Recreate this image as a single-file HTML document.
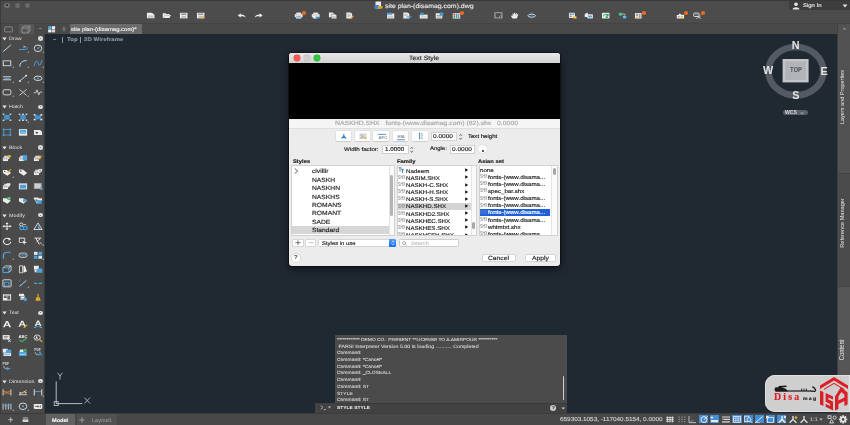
<!DOCTYPE html>
<html>
<head>
<meta charset="utf-8">
<title>site plan</title>
<style>
html,body{margin:0;padding:0;}
html{width:850px;height:425px;overflow:hidden;background:#202832;}
body{-webkit-font-smoothing:antialiased;will-change:transform;width:850px;height:425px;overflow:hidden;position:relative;background:#202832;font-family:"Liberation Sans",sans-serif;}
.a{position:absolute;}
.t{position:absolute;white-space:nowrap;line-height:1;-webkit-text-stroke:.15px currentColor;transform-origin:0 0;transform:scaleX(1.12) rotate(0.03deg);}
svg{position:absolute;overflow:visible;}
#top{left:0;top:0;width:850px;height:34px;background:#4c4c4c;}
#tabrow{left:0;top:23px;width:850px;height:11px;background:#494949;border-top:1px solid #434343;box-sizing:border-box;}
#left{left:0;top:34px;width:45px;height:380px;background:#4a4a4a;}
#right{left:836.8px;top:34px;width:13.2px;height:380px;background:#4d4d4d;}
#status{left:0;top:413px;width:850px;height:12px;background:#484848;}
#canvas{left:46px;top:34px;width:790px;height:379px;background:#202832;}
#dlg{background:#ececec;border-radius:3px;overflow:hidden;box-shadow:0 0 0 .6px rgba(0,0,0,.7),0 3px 9px rgba(0,0,0,.55);}
#dlgtitle{left:0;top:0;width:271px;height:10px;background:linear-gradient(#e9e9e9,#d2d2d2);}
#preview{left:0;width:271px;background:#000;}
.lst{background:#fff;border:1px solid #d2d2d2;box-sizing:border-box;overflow:hidden;}
.dt{font-size:6px;color:#222;}
.btn{background:#fff;border:1px solid #d6d6d6;border-radius:2px;box-sizing:border-box;}
.fld{background:#fff;border:1px solid #d2d2d2;box-sizing:border-box;}
#cmd{left:334px;top:335px;width:233px;height:66px;background:#4a4a4a;}
#cmdin{left:316px;top:401px;width:251px;height:12px;background:#464646;}
.ct{font-size:5.2px;color:#c9c9c9;left:3px;}
.sec{font-size:4.8px;color:#e2e2e2;-webkit-text-stroke:0;}
</style>
</head>
<body>
<div id="canvas" class="a" style="left:45px;width:792px;"></div>
<div id="top" class="a"></div>
<div id="tabrow" class="a"></div>
<div class="a" style="left:0;top:0;width:850px;height:1px;background:#3c3636;"></div>
<div class="a" style="left:4.4px;top:2.5px;width:5.2px;height:5.2px;border-radius:50%;background:#707070;"></div>
<div class="a" style="left:6px;top:4.1px;width:2px;height:2px;border-radius:50%;background:#242424;"></div>
<div class="a" style="left:14.5px;top:2.5px;width:5.2px;height:5.2px;border-radius:50%;background:#696969;"></div>
<div class="a" style="left:24.5px;top:2.5px;width:5.2px;height:5.2px;border-radius:50%;background:#696969;"></div>
<svg style="left:374px;top:1px" width="9" height="8" viewBox="0 0 9 8"><rect x="1.5" y="0.5" width="5.5" height="7" fill="#e8e8e8"/><rect x="0.5" y="4" width="4.5" height="3.5" fill="#3f86cc"/><rect x="4" y="5" width="4.5" height="2.5" fill="#d8a630"/></svg>
<div class="t" style="left:384.8px;top:2.6px;font-size:6.2px;color:#e4e4e4;">site plan-(disamag.com).dwg</div>
<div class="a" style="left:789px;top:1px;width:61px;height:9px;background:#3d3d3d;"></div>
<svg style="left:792px;top:1.5px" width="8" height="8" viewBox="0 0 8 8"><circle cx="4" cy="2.3" r="1.8" fill="#e6e6e6"/><path d="M0.6 7.6 C0.6 4.4 7.4 4.4 7.4 7.6Z" fill="#e6e6e6"/></svg>
<div class="t" style="left:802.8px;top:3.2px;font-size:5.3px;color:#e2e2e2;">Sign In</div>
<svg style="left:842px;top:4px" width="6" height="4" viewBox="0 0 6 4"><path d="M0.5 0.5 L5.5 0.5 L3 3.5Z" fill="#e0e0e0"/></svg>
<svg style="left:145.7px;top:12.399999999999999px" width="9.4" height="7" viewBox="0 0 10 9" preserveAspectRatio="none"><path d="M1 1 L6.2 1 L9 3.4 L9 8 L1 8Z" fill="#ededed"/><path d="M2 5.2H8M2 6.6H8" stroke="#9a9a9a" stroke-width=".7"/></svg>
<svg style="left:162.3px;top:12.399999999999999px" width="9.4" height="7" viewBox="0 0 10 9" preserveAspectRatio="none"><path d="M0.8 7.8 L0.8 1.6 L3.8 1.6 L4.6 2.6 L8 2.6 L8 4 L9.6 4 L7.8 7.8Z" fill="#ededed"/><path d="M1.6 7.4 L3 4.4 L9 4.4" stroke="#9a9a9a" stroke-width=".6" fill="none"/></svg>
<svg style="left:179.3px;top:12.399999999999999px" width="9.4" height="7" viewBox="0 0 10 9" preserveAspectRatio="none"><rect x="1" y="1" width="8" height="7.2" fill="#ededed"/><rect x="2.2" y="1.8" width="5.6" height="2.2" fill="#9a9a9a"/><rect x="2.6" y="5.2" width="4.8" height="2.4" fill="#bdbdbd"/></svg>
<svg style="left:195.7px;top:12.399999999999999px" width="9.4" height="7" viewBox="0 0 10 9" preserveAspectRatio="none"><rect x="1" y="1" width="8" height="7.2" fill="#ededed"/><rect x="2.2" y="1.8" width="5.6" height="2.2" fill="#9a9a9a"/><rect x="2.6" y="5.2" width="4.8" height="2.4" fill="#bdbdbd"/><path d="M5.6 8.4 L9 5.2" stroke="#e8b12a" stroke-width="1.4"/><path d="M8.6 5.6 L9.6 4.6" stroke="#d9402c" stroke-width="1.4"/></svg>
<svg style="left:237.3px;top:12.399999999999999px" width="9.4" height="7" viewBox="0 0 10 9" preserveAspectRatio="none"><path d="M0.8 4.4 L4 1.6 L4 3.2 C7 3.2 8.8 4.6 9.2 7.4 C8 5.8 6.4 5.4 4 5.6 L4 7.2Z" fill="#ededed"/></svg>
<svg style="left:253.5px;top:12.399999999999999px" width="9.4" height="7" viewBox="0 0 10 9" preserveAspectRatio="none"><path d="M9.2 4.4 L6 1.6 L6 3.2 C3 3.2 1.2 4.6 0.8 7.4 C2 5.8 3.6 5.4 6 5.6 L6 7.2Z" fill="#ededed"/></svg>
<svg style="left:294.3px;top:12.399999999999999px" width="9.4" height="7" viewBox="0 0 10 9" preserveAspectRatio="none"><rect x="2.4" y="0.8" width="5.2" height="2.6" fill="#ededed"/><rect x="0.8" y="2.6" width="8.4" height="4" rx=".8" fill="#ededed"/><rect x="2.2" y="5.4" width="5.6" height="3" fill="#ededed"/><rect x="2.4" y="5.6" width="5.2" height="1.3" fill="#3f9ad6"/><path d="M1.6 3.8H8.4" stroke="#9a9a9a" stroke-width=".6"/></svg>
<div class="a" style="left:302.4px;top:11.299999999999999px;width:4px;height:3.6px;border-radius:50%;background:#f26a1e;"></div>
<svg style="left:311.1px;top:12.399999999999999px" width="9.4" height="7" viewBox="0 0 10 9" preserveAspectRatio="none"><rect x="2.4" y="0.8" width="5.2" height="2.6" fill="#ededed"/><rect x="0.8" y="2.6" width="8.4" height="4" rx=".8" fill="#ededed"/><rect x="2.2" y="5.4" width="4.6" height="3" fill="#ededed"/><rect x="5" y="6" width="4.4" height="2" fill="#3f9ad6"/><path d="M1.6 3.8H8.4" stroke="#9a9a9a" stroke-width=".6"/></svg>
<svg style="left:327.7px;top:12.399999999999999px" width="9.4" height="7" viewBox="0 0 10 9" preserveAspectRatio="none"><path d="M1 0.8 L5 0.8 L6.6 2.2 L6.6 6.8 L1 6.8Z" fill="#ededed"/><path d="M3.6 2.8 L7.6 2.8 L9.2 4.2 L9.2 8.6 L3.6 8.6Z" fill="#ededed" stroke="#4c4c4c" stroke-width=".5"/><path d="M4.6 5.8H8.2M4.6 7.2H8.2" stroke="#9a9a9a" stroke-width=".6"/></svg>
<svg style="left:344.5px;top:12.399999999999999px" width="9.4" height="7" viewBox="0 0 10 9" preserveAspectRatio="none"><path d="M1.4 0.8 L5.8 0.8 L7.6 2.4 L7.6 8.4 L1.4 8.4Z" fill="#ededed"/><path d="M2.4 3H6M2.4 4.4H6.4M2.4 5.8H5" stroke="#9a9a9a" stroke-width=".6"/><path d="M5.6 8.4 L9 5.2" stroke="#e8b12a" stroke-width="1.4"/><path d="M8.6 5.6 L9.6 4.6" stroke="#d9402c" stroke-width="1.4"/></svg>
<svg style="left:385.7px;top:12.399999999999999px" width="9.4" height="7" viewBox="0 0 10 9" preserveAspectRatio="none"><path d="M1.2 2 L8.8 2 L8.8 8.4 L1.2 8.4Z" fill="#ededed"/><path d="M1 0.8 L6.6 0.8 L6.6 3.4 L1 3.4Z" fill="#3f9ad6"/><path d="M2.2 5.4H7.8M2.2 6.8H7.8" stroke="#9a9a9a" stroke-width=".6"/></svg>
<svg style="left:402.1px;top:12.399999999999999px" width="9.4" height="7" viewBox="0 0 10 9" preserveAspectRatio="none"><path d="M1.4 0.8 L5.8 0.8 L7.8 2.4 L7.8 8.4 L1.4 8.4Z" fill="#ededed"/><path d="M2.4 3H6M2.4 4.4H6" stroke="#9a9a9a" stroke-width=".6"/><path d="M4.6 6.4 L9.4 6.4 M7.8 4.8 L9.6 6.4 L7.8 8" stroke="#3f9ad6" stroke-width="1.1" fill="none"/></svg>
<svg style="left:418.9px;top:12.399999999999999px" width="9.4" height="7" viewBox="0 0 10 9" preserveAspectRatio="none"><path d="M0.8 3.4 L9.2 3.4 L9.2 8.4 L0.8 8.4Z" fill="#ededed"/><rect x="1.6" y="0.8" width="3.2" height="3.4" fill="#3f9ad6"/><path d="M2 6.2H8" stroke="#9a9a9a" stroke-width=".6"/></svg>
<svg style="left:435.3px;top:12.399999999999999px" width="9.4" height="7" viewBox="0 0 10 9" preserveAspectRatio="none"><rect x="0.8" y="1.6" width="7" height="6.8" fill="#ededed"/><rect x="1.6" y="4" width="5.4" height="1.2" fill="#9a9a9a"/><rect x="1.6" y="6" width="5.4" height="1.2" fill="#9a9a9a"/><circle cx="7" cy="2.6" r="2.2" fill="#3f9ad6"/></svg>
<svg style="left:452.1px;top:12.399999999999999px" width="9.4" height="7" viewBox="0 0 10 9" preserveAspectRatio="none"><rect x="0.8" y="1.4" width="8" height="7" fill="#ededed"/><rect x="1.6" y="2" width="1.8" height="2.6" fill="#d9402c"/><rect x="1.6" y="5" width="1.8" height="2.6" fill="#3aa655"/><rect x="4.2" y="2" width="1.6" height="5.8" fill="#3f9ad6"/><rect x="6.4" y="2" width="1.6" height="5.8" fill="#9a9a9a"/></svg>
<div class="a" style="left:460.2px;top:11.299999999999999px;width:4px;height:3.6px;border-radius:50%;background:#f26a1e;"></div>
<svg style="left:493.5px;top:12.399999999999999px" width="9.4" height="7" viewBox="0 0 10 9" preserveAspectRatio="none"><rect x="1" y="1" width="7.4" height="6.6" fill="none" stroke="#c4c4c4" stroke-width=".9"/><circle cx="7" cy="6.4" r="1.3" fill="#4c4c4c" stroke="#c4c4c4" stroke-width=".6"/></svg>
<svg style="left:510.3px;top:12.399999999999999px" width="9.4" height="7" viewBox="0 0 10 9" preserveAspectRatio="none"><path d="M2.6 8.4 L1 5.2 L1.8 4.6 L2.8 5.6 L2.6 2 L3.6 1.8 L4 4 L4.4 1 L5.4 1 L5.6 4 L6.4 1.4 L7.4 1.6 L7 4.4 L8.2 2.6 L9 3 L7.8 6.4 L7.4 8.4Z" fill="#ededed"/></svg>
<svg style="left:527.1px;top:12.399999999999999px" width="9.4" height="7" viewBox="0 0 10 9" preserveAspectRatio="none"><ellipse cx="5" cy="4.8" rx="4" ry="1.9" fill="none" stroke="#ededed" stroke-width="1"/><path d="M5 0.6V8.6" stroke="#3f9ad6" stroke-width="1"/><path d="M3.8 2 L5 0.4 L6.2 2Z" fill="#3f9ad6"/></svg>
<svg style="left:567.7px;top:12.399999999999999px" width="9.4" height="7" viewBox="0 0 10 9" preserveAspectRatio="none"><rect x="1" y="1" width="6.4" height="6.6" fill="#ededed"/><rect x="1.8" y="1.8" width="2.2" height="2" fill="#3f9ad6"/><rect x="4.6" y="1.8" width="2.2" height="2" fill="#9a9a9a"/><rect x="1.8" y="4.6" width="2.2" height="2" fill="#9a9a9a"/><path d="M5.6 5.2 L9 5.2 L9 8.4 L5.6 8.4Z" fill="#e8b12a"/><path d="M5.8 5.2 L9 8.4" stroke="#ededed" stroke-width=".6"/></svg>
<svg style="left:584.1px;top:12.399999999999999px" width="9.4" height="7" viewBox="0 0 10 9" preserveAspectRatio="none"><path d="M0.8 2.6 L4 0.8 L4 6.4 L0.8 6.4Z" fill="#ededed"/><rect x="3.6" y="3" width="5.8" height="5.2" fill="#ededed"/><rect x="4.6" y="4.6" width="3.8" height="2.2" fill="#3f9ad6"/></svg>
<svg style="left:600.7px;top:12.399999999999999px" width="9.4" height="7" viewBox="0 0 10 9" preserveAspectRatio="none"><rect x="1" y="1" width="8" height="7.4" rx="1" fill="#ededed"/><path d="M2.4 5.8 C2.4 2.6 6.6 2 7.4 4.4 M7.8 2.6 L7.6 4.8 L5.6 4.2" stroke="#38a869" stroke-width="1.1" fill="none"/><circle cx="6.2" cy="6.6" r="1.3" fill="#38a869"/></svg>
<svg style="left:617.7px;top:12.399999999999999px" width="9.4" height="7" viewBox="0 0 10 9" preserveAspectRatio="none"><circle cx="2.8" cy="2.8" r="2" fill="#52c28a"/><circle cx="7" cy="6.4" r="2" fill="#5bbfe8"/><path d="M5 2.4 C7.4 2.2 7.6 3.2 7.4 4.2" stroke="#ededed" stroke-width=".8" fill="none"/></svg>
<svg style="left:634.3px;top:12.399999999999999px" width="9.4" height="7" viewBox="0 0 10 9" preserveAspectRatio="none"><rect x="1" y="1.4" width="7" height="7" fill="#ededed"/><rect x="2" y="2.4" width="2.4" height="2.6" fill="#9a9a9a"/><rect x="2" y="6" width="2.4" height="1.6" fill="#e8b12a"/><rect x="5.2" y="2.4" width="1.8" height="5.2" fill="#9a9a9a"/></svg>
<div class="a" style="left:642.4px;top:11.299999999999999px;width:4px;height:3.6px;border-radius:50%;background:#f26a1e;"></div>
<svg style="left:676.1px;top:12.399999999999999px" width="9.4" height="7" viewBox="0 0 10 9" preserveAspectRatio="none"><path d="M0.8 4 L3 4 L3 2.4 L5 2.4 L5 3.4 L8.6 3.4 L8.6 8.2 L0.8 8.2Z" fill="#ededed"/><rect x="1.8" y="5.2" width="2" height="1.8" fill="#9a9a9a"/><rect x="5" y="5.2" width="2.4" height="1.8" fill="#e8b12a"/></svg>
<div class="a" style="left:684.2px;top:11.299999999999999px;width:4px;height:3.6px;border-radius:50%;background:#f26a1e;"></div>
<svg style="left:692.5px;top:12.399999999999999px" width="9.4" height="7" viewBox="0 0 10 9" preserveAspectRatio="none"><rect x="0.8" y="1.4" width="5.6" height="4.4" rx=".8" fill="none" stroke="#ededed" stroke-width="1"/><path d="M1.8 3.4H5.2" stroke="#9a9a9a" stroke-width=".7"/><path d="M3.6 8.6 L8.4 4.6 M4.4 5.2 L8.6 8.6" stroke="#d8d8d8" stroke-width=".9"/></svg>
<div class="a" style="left:700.6px;top:11.299999999999999px;width:4px;height:3.6px;border-radius:50%;background:#f26a1e;"></div>
<div class="a" style="left:18.5px;top:24px;width:15.5px;height:10px;background:#565656;"></div>
<svg style="left:4px;top:25.5px" width="9" height="7" viewBox="0 0 9 7"><rect x="0.7" y="0.9" width="7.6" height="5" rx=".6" fill="none" stroke="#8e8e8e" stroke-width=".9"/></svg>
<svg style="left:21px;top:24.5px" width="10" height="9" viewBox="0 0 10 9"><path d="M1 3 L3 1 L9 1 L9 6 L7 8 L1 8Z M1 3 L7 3 L9 1 M7 3 L7 8" fill="none" stroke="#9a9a9a" stroke-width=".8"/></svg>
<div class="a" style="left:38.5px;top:28.3px;width:3px;height:1.2px;background:#7a7a7a;"></div>
<svg style="left:48px;top:25.6px" width="7.2" height="6.6" viewBox="0 0 7.2 6.6"><rect x="0.2" y="0.2" width="3.2" height="2.9" fill="#4db4ee"/><rect x="3.9" y="0.2" width="3.2" height="2.9" fill="#eeeeee"/><rect x="0.2" y="3.5" width="3.2" height="2.9" fill="#f2f2f2"/><rect x="3.9" y="3.5" width="3.2" height="2.9" fill="#dcdcdc"/></svg>
<svg style="left:61.2px;top:26px" width="6" height="6" viewBox="0 0 6 6"><path d="M3 0.4V5.6" stroke="#8a8a8a" stroke-width="1"/><path d="M0.4 3H5.6" stroke="#7c7c7c" stroke-width=".7"/></svg>
<div class="a" style="left:70px;top:24px;width:72px;height:10px;background:#6b6b6b;"></div>
<div class="t" style="left:71.4px;top:26.6px;font-size:5.3px;color:#f0f0f0;">site plan-(disamag.com)*</div>
<div class="a" style="left:837.4px;top:23.6px;width:12.6px;height:10.4px;background:#525252;border-left:1px solid #424242;box-sizing:border-box;"></div>
<div class="t" style="left:842.6px;top:27.4px;font-size:4.5px;color:#9a9a9a;letter-spacing:-.4px;">&#171;</div>
<div id="left" class="a"></div>
<div class="a" style="left:0;top:0;width:1px;height:425px;background:#3b3b3b;"></div>
<div class="a" style="left:44.4px;top:34px;width:1px;height:379px;background:#3a3a3a;"></div>
<svg style="left:2.4px;top:36.8px" width="5" height="3.6" viewBox="0 0 5 3.6"><path d="M0.3 0.4 L4.7 0.4 L2.5 3.6Z" fill="#e4e4e4"/></svg>
<div class="t sec" style="left:8.8px;top:36.9px;">Draw</div>
<div class="a" style="left:38px;top:36.1px;width:5px;height:4.6px;border-radius:50%;background:#dedede;"></div>
<div class="a" style="left:39.7px;top:37.7px;width:1.6px;height:1.4px;border-radius:50%;background:#4a4a4a;"></div>
<svg style="left:2.4px;top:43.9px" width="10" height="8.6" viewBox="0 0 11 11" preserveAspectRatio="none"><path d="M1.4 9.6 L9.6 1.4" stroke="#ececec" stroke-width="1.0" fill="none" /><circle cx="1.4" cy="9.6" r="0.9" fill="#4aa3e0"/><circle cx="9.6" cy="1.4" r="0.9" fill="#4aa3e0"/></svg>
<svg style="left:17.6px;top:43.9px" width="10" height="8.6" viewBox="0 0 11 11" preserveAspectRatio="none"><path d="M1.2 7 L4.4 7 L8.4 7 C10.4 7 10.4 3.6 8 3.6 L6.4 3.6" stroke="#4aa3e0" stroke-width="1.1" fill="none" /><path d="M6 2.6 L7.4 3.6 L6 4.8" stroke="#ececec" stroke-width="0.8" fill="none" /></svg>
<svg style="left:26.8px;top:51.4px" width="2.2" height="2" viewBox="0 0 2.2 2"><path d="M2 0.2 L2 1.8 L0.2 1.8Z" fill="#b0b0b0"/></svg>
<svg style="left:32.8px;top:43.9px" width="10" height="8.6" viewBox="0 0 11 11" preserveAspectRatio="none"><circle cx="5.5" cy="5.5" r="4.2" fill="none" stroke="#ececec" stroke-width="1.0"/><path d="M5.5 5.5 L8.4 2.6" stroke="#4aa3e0" stroke-width="1.0" fill="none" /><circle cx="5.5" cy="5.5" r="0.9" fill="#4aa3e0"/></svg>
<svg style="left:42.0px;top:51.4px" width="2.2" height="2" viewBox="0 0 2.2 2"><path d="M2 0.2 L2 1.8 L0.2 1.8Z" fill="#b0b0b0"/></svg>
<svg style="left:2.4px;top:58.7px" width="10" height="8.6" viewBox="0 0 11 11" preserveAspectRatio="none"><rect x="1.4" y="2.4" width="8.2" height="6.2" rx="0" fill="none" stroke="#ececec" stroke-width="1.0"/><circle cx="1.4" cy="2.4" r="0.9" fill="#4aa3e0"/><circle cx="9.6" cy="8.6" r="0.9" fill="#4aa3e0"/></svg>
<svg style="left:11.6px;top:66.2px" width="2.2" height="2" viewBox="0 0 2.2 2"><path d="M2 0.2 L2 1.8 L0.2 1.8Z" fill="#b0b0b0"/></svg>
<svg style="left:17.6px;top:58.7px" width="10" height="8.6" viewBox="0 0 11 11" preserveAspectRatio="none"><path d="M2 9.4 C2 5 5 2 9.4 2" stroke="#ececec" stroke-width="1.0" fill="none" /><circle cx="2" cy="9.4" r="0.9" fill="#4aa3e0"/><circle cx="9.4" cy="2" r="0.9" fill="#4aa3e0"/><circle cx="4" cy="4.2" r="0.8" fill="#4aa3e0"/></svg>
<svg style="left:26.8px;top:66.2px" width="2.2" height="2" viewBox="0 0 2.2 2"><path d="M2 0.2 L2 1.8 L0.2 1.8Z" fill="#b0b0b0"/></svg>
<svg style="left:32.8px;top:58.7px" width="10" height="8.6" viewBox="0 0 11 11" preserveAspectRatio="none"><path d="M1.4 9 C2.4 1.4 4.8 1.4 5.6 5.4 C6.4 9.4 8.6 9 9.6 1.6" stroke="#4aa3e0" stroke-width="1.1" fill="none" /></svg>
<svg style="left:42.0px;top:66.2px" width="2.2" height="2" viewBox="0 0 2.2 2"><path d="M2 0.2 L2 1.8 L0.2 1.8Z" fill="#b0b0b0"/></svg>
<svg style="left:2.4px;top:73.6px" width="10" height="8.6" viewBox="0 0 11 11" preserveAspectRatio="none"><path d="M1 3.6 H10 M1 7.4 H10" stroke="#ececec" stroke-width="1.0" fill="none" /><path d="M2.4 5.5 H8.6" stroke="#4aa3e0" stroke-width="1.2" fill="none" /></svg>
<svg style="left:11.6px;top:81.1px" width="2.2" height="2" viewBox="0 0 2.2 2"><path d="M2 0.2 L2 1.8 L0.2 1.8Z" fill="#b0b0b0"/></svg>
<svg style="left:17.6px;top:73.6px" width="10" height="8.6" viewBox="0 0 11 11" preserveAspectRatio="none"><path d="M2 9 L9 2" stroke="#ececec" stroke-width="1.0" fill="none" /><circle cx="2" cy="9" r="1.1" fill="#ececec"/><circle cx="9" cy="2" r="1.1" fill="#ececec"/><circle cx="5.5" cy="5.5" r="0.8" fill="#4aa3e0"/></svg>
<svg style="left:26.8px;top:81.1px" width="2.2" height="2" viewBox="0 0 2.2 2"><path d="M2 0.2 L2 1.8 L0.2 1.8Z" fill="#b0b0b0"/></svg>
<svg style="left:32.8px;top:73.6px" width="10" height="8.6" viewBox="0 0 11 11" preserveAspectRatio="none"><ellipse cx="5.5" cy="5.5" rx="4.4" ry="2.8" fill="none" stroke="#ececec" stroke-width="1"/><circle cx="5.5" cy="5.5" r="1.1" fill="#4aa3e0"/></svg>
<svg style="left:42.0px;top:81.1px" width="2.2" height="2" viewBox="0 0 2.2 2"><path d="M2 0.2 L2 1.8 L0.2 1.8Z" fill="#b0b0b0"/></svg>
<svg style="left:2.4px;top:87.7px" width="10" height="8.6" viewBox="0 0 11 11" preserveAspectRatio="none"><rect x="1.2" y="2.2" width="8.6" height="6.6" rx="2" fill="none" stroke="#ececec" stroke-width="1.0"/></svg>
<svg style="left:11.6px;top:95.2px" width="2.2" height="2" viewBox="0 0 2.2 2"><path d="M2 0.2 L2 1.8 L0.2 1.8Z" fill="#b0b0b0"/></svg>
<svg style="left:17.6px;top:87.7px" width="10" height="8.6" viewBox="0 0 11 11" preserveAspectRatio="none"><path d="M1.6 1.8 L9.4 9.4" stroke="#ececec" stroke-width="0.9" fill="none" /><path d="M1.6 9.4 L9.4 1.8" stroke="#ececec" stroke-width="0.9" fill="none" /><circle cx="5.5" cy="5.6" r="0.8" fill="#4aa3e0"/></svg>
<svg style="left:26.8px;top:95.2px" width="2.2" height="2" viewBox="0 0 2.2 2"><path d="M2 0.2 L2 1.8 L0.2 1.8Z" fill="#b0b0b0"/></svg>
<svg style="left:32.8px;top:87.7px" width="10" height="8.6" viewBox="0 0 11 11" preserveAspectRatio="none"><path d="M1 6 L3.2 6 L4.4 2.4 L6.4 8.8 L7.6 5.2 L10 5.2" stroke="#ececec" stroke-width="0.9" fill="none" /></svg>
<svg style="left:2.4px;top:105.2px" width="5" height="3.6" viewBox="0 0 5 3.6"><path d="M0.3 0.4 L4.7 0.4 L2.5 3.6Z" fill="#e4e4e4"/></svg>
<div class="t sec" style="left:8.8px;top:105.30000000000001px;">Hatch</div>
<div class="a" style="left:38px;top:104.5px;width:5px;height:4.6px;border-radius:50%;background:#dedede;"></div>
<div class="a" style="left:39.7px;top:106.10000000000001px;width:1.6px;height:1.4px;border-radius:50%;background:#4a4a4a;"></div>
<svg style="left:2.4px;top:113.3px" width="10" height="8.6" viewBox="0 0 11 11" preserveAspectRatio="none"><rect x="2.6" y="2.6" width="5.8" height="5.8" rx="0" fill="#3a8fd0"/><path d="M2.4 5 L5 2.4 M2.4 8 L8 2.4 M5 8.6 L8.6 5" stroke="#4aa3e0" stroke-width="0.8" fill="none" /><rect x="0.8" y="0.8" width="1.8" height="1.8" rx="0" fill="#d8d8d8"/><rect x="8.4" y="0.8" width="1.8" height="1.8" rx="0" fill="#d8d8d8"/><rect x="0.8" y="8.4" width="1.8" height="1.8" rx="0" fill="#d8d8d8"/><rect x="8.4" y="8.4" width="1.8" height="1.8" rx="0" fill="#d8d8d8"/></svg>
<svg style="left:17.6px;top:113.3px" width="10" height="8.6" viewBox="0 0 11 11" preserveAspectRatio="none"><rect x="2.6" y="2.6" width="5.8" height="5.8" rx="0" fill="#3a8fd0"/><path d="M2.4 5 L5 2.4 M2.4 8 L8 2.4 M5 8.6 L8.6 5" stroke="#4aa3e0" stroke-width="0.8" fill="none" /><rect x="0.8" y="0.8" width="1.8" height="1.8" rx="0" fill="#d8d8d8"/><rect x="8.4" y="0.8" width="1.8" height="1.8" rx="0" fill="#d8d8d8"/><rect x="0.8" y="8.4" width="1.8" height="1.8" rx="0" fill="#d8d8d8"/><rect x="8.4" y="8.4" width="1.8" height="1.8" rx="0" fill="#d8d8d8"/><rect x="4.6" y="0.8" width="1.8" height="1.8" rx="0" fill="#ececec"/><rect x="4.6" y="8.4" width="1.8" height="1.8" rx="0" fill="#ececec"/></svg>
<svg style="left:26.8px;top:120.8px" width="2.2" height="2" viewBox="0 0 2.2 2"><path d="M2 0.2 L2 1.8 L0.2 1.8Z" fill="#b0b0b0"/></svg>
<svg style="left:32.8px;top:113.3px" width="10" height="8.6" viewBox="0 0 11 11" preserveAspectRatio="none"><rect x="2" y="3" width="7" height="5" rx="0" fill="#3a8fd0"/><path d="M2 6 L5 3 M4 8 L9 3" stroke="#4aa3e0" stroke-width="0.8" fill="none" /><rect x="0.8" y="1.4" width="2" height="2" rx="0" fill="#ececec"/><rect x="8.2" y="1.4" width="2" height="2" rx="0" fill="#ececec"/><rect x="0.8" y="7.4" width="2" height="2" rx="0" fill="#ececec"/><rect x="8.2" y="7.4" width="2" height="2" rx="0" fill="#ececec"/></svg>
<svg style="left:2.4px;top:127.7px" width="10" height="8.6" viewBox="0 0 11 11" preserveAspectRatio="none"><rect x="2" y="2" width="7" height="7" rx="0" fill="none" stroke="#4aa3e0" stroke-width="1.0"/><rect x="0.8" y="0.8" width="1.8" height="1.8" rx="0" fill="#4aa3e0"/><rect x="8.4" y="0.8" width="1.8" height="1.8" rx="0" fill="#4aa3e0"/><rect x="0.8" y="8.4" width="1.8" height="1.8" rx="0" fill="#4aa3e0"/><rect x="8.4" y="8.4" width="1.8" height="1.8" rx="0" fill="#4aa3e0"/></svg>
<svg style="left:17.6px;top:127.7px" width="10" height="8.6" viewBox="0 0 11 11" preserveAspectRatio="none"><rect x="1" y="1.4" width="9" height="8.4" rx="0" fill="#ececec"/><rect x="2" y="2.4" width="7" height="5" rx="0" fill="#4aa3e0"/><path d="M2 7 L4.6 4.6 L6.4 6.4 L7.6 5.4 L9 7" stroke="#ececec" stroke-width="0.7" fill="none" /></svg>
<svg style="left:32.8px;top:127.7px" width="10" height="8.6" viewBox="0 0 11 11" preserveAspectRatio="none"><path d="M1 2.4 L6.6 2.4 C9 2.4 10 4.4 10 6.4 L10 9 L1 9Z" fill="#ececec"/><rect x="3" y="5" width="2.4" height="2" rx="0" fill="#4a4a4a"/></svg>
<svg style="left:2.4px;top:145.8px" width="5" height="3.6" viewBox="0 0 5 3.6"><path d="M0.3 0.4 L4.7 0.4 L2.5 3.6Z" fill="#e4e4e4"/></svg>
<div class="t sec" style="left:8.8px;top:145.9px;">Block</div>
<div class="a" style="left:38px;top:145.1px;width:5px;height:4.6px;border-radius:50%;background:#dedede;"></div>
<div class="a" style="left:39.7px;top:146.7px;width:1.6px;height:1.4px;border-radius:50%;background:#4a4a4a;"></div>
<svg style="left:2.4px;top:153.5px" width="10" height="8.6" viewBox="0 0 11 11" preserveAspectRatio="none"><rect x="1" y="4.4" width="5.6" height="4.6" rx="0" fill="#ececec"/><rect x="2.4" y="2.2" width="5.8" height="4.4" rx="0" fill="#d6d6d6"/><rect x="1.8" y="5.4" width="1.6" height="1.4" rx="0" fill="#a0a0a0"/><rect x="4.2" y="5.4" width="1.6" height="1.4" rx="0" fill="#a0a0a0"/><circle cx="8" cy="3" r="1.8" fill="#e8b12a"/></svg>
<svg style="left:17.6px;top:153.5px" width="10" height="8.6" viewBox="0 0 11 11" preserveAspectRatio="none"><rect x="1" y="4.4" width="5.6" height="4.6" rx="0" fill="#ececec"/><rect x="2.4" y="2.2" width="5.8" height="4.4" rx="0" fill="#d6d6d6"/><rect x="1.8" y="5.4" width="1.6" height="1.4" rx="0" fill="#a0a0a0"/><rect x="4.2" y="5.4" width="1.6" height="1.4" rx="0" fill="#a0a0a0"/><rect x="5.4" y="1.4" width="4.6" height="7" rx="0" fill="#4aa3e0"/></svg>
<svg style="left:32.8px;top:153.5px" width="10" height="8.6" viewBox="0 0 11 11" preserveAspectRatio="none"><rect x="1" y="4.4" width="5.6" height="4.6" rx="0" fill="#ececec"/><rect x="2.4" y="2.2" width="5.8" height="4.4" rx="0" fill="#d6d6d6"/><rect x="1.8" y="5.4" width="1.6" height="1.4" rx="0" fill="#a0a0a0"/><rect x="4.2" y="5.4" width="1.6" height="1.4" rx="0" fill="#a0a0a0"/><path d="M5 8 L9.6 2.4" stroke="#e8b12a" stroke-width="1.4" fill="none" /><path d="M9 3 L10 1.8" stroke="#d9402c" stroke-width="1.4" fill="none" /></svg>
<svg style="left:2.4px;top:168.1px" width="10" height="8.6" viewBox="0 0 11 11" preserveAspectRatio="none"><path d="M1 2.4 L5 2.4 L10 6 L6 10 L1 6.4Z" fill="#ececec"/><circle cx="3" cy="4.4" r="0.8" fill="#4a4a4a"/><path d="M6 6 L9.8 1.8" stroke="#e8b12a" stroke-width="1.3" fill="none" /></svg>
<svg style="left:11.6px;top:175.6px" width="2.2" height="2" viewBox="0 0 2.2 2"><path d="M2 0.2 L2 1.8 L0.2 1.8Z" fill="#b0b0b0"/></svg>
<svg style="left:17.6px;top:168.1px" width="10" height="8.6" viewBox="0 0 11 11" preserveAspectRatio="none"><path d="M1 1.8 L5.4 1.8 L10 6.4 L6.4 10 L1 5.6Z" fill="#ececec"/><circle cx="3" cy="3.8" r="0.9" fill="#4a4a4a"/></svg>
<svg style="left:32.8px;top:168.1px" width="10" height="8.6" viewBox="0 0 11 11" preserveAspectRatio="none"><rect x="1" y="4.4" width="5.6" height="4.6" rx="0" fill="#ececec"/><rect x="2.4" y="2.2" width="5.8" height="4.4" rx="0" fill="#d6d6d6"/><rect x="1.8" y="5.4" width="1.6" height="1.4" rx="0" fill="#a0a0a0"/><rect x="4.2" y="5.4" width="1.6" height="1.4" rx="0" fill="#a0a0a0"/><rect x="6" y="1.2" width="4" height="3.4" rx="0" fill="#ececec"/><rect x="6.8" y="2" width="2.4" height="1.6" rx="0" fill="#a0a0a0"/></svg>
<svg style="left:2.4px;top:182.3px" width="10" height="8.6" viewBox="0 0 11 11" preserveAspectRatio="none"><rect x="1" y="4.4" width="5.6" height="4.6" rx="0" fill="#ececec"/><rect x="2.4" y="2.2" width="5.8" height="4.4" rx="0" fill="#d6d6d6"/><rect x="1.8" y="5.4" width="1.6" height="1.4" rx="0" fill="#a0a0a0"/><rect x="4.2" y="5.4" width="1.6" height="1.4" rx="0" fill="#a0a0a0"/><rect x="5.4" y="1.6" width="3.8" height="3" rx="0" fill="#ececec"/></svg>
<svg style="left:17.6px;top:182.3px" width="10" height="8.6" viewBox="0 0 11 11" preserveAspectRatio="none"><rect x="1" y="1.8" width="9" height="7.6" rx="0" fill="#ececec"/><rect x="2" y="3.8" width="7" height="4.6" rx="0" fill="#4aa3e0"/><path d="M2 2.8 H9" stroke="#a0a0a0" stroke-width="0.6" fill="none" /></svg>
<svg style="left:32.8px;top:182.3px" width="10" height="8.6" viewBox="0 0 11 11" preserveAspectRatio="none"><rect x="1" y="1.4" width="8.4" height="7.4" rx="0" fill="#cfcfcf"/><rect x="1.6" y="2" width="7.2" height="6.2" rx="0" fill="none" stroke="#8f8f8f" stroke-width="0.6"/><circle cx="9" cy="8.6" r="1.6" fill="#4aa3e0"/></svg>
<svg style="left:2.4px;top:195.9px" width="10" height="8.6" viewBox="0 0 11 11" preserveAspectRatio="none"><path d="M1 3 L5.4 3 L9.6 6.2 L6 9.8 L1 6.6Z" fill="#ececec"/><circle cx="7.6" cy="3" r="2.2" fill="#3fae62"/><path d="M6.6 3 L7.4 3.8 L8.8 2.2" stroke="#ececec" stroke-width="0.6" fill="none" /></svg>
<svg style="left:17.6px;top:195.9px" width="10" height="8.6" viewBox="0 0 11 11" preserveAspectRatio="none"><path d="M1 3 L5.4 3 L9.6 6.2 L6 9.8 L1 6.6Z" fill="#ececec"/><rect x="5.4" y="4.4" width="4.6" height="3" rx="0" fill="#4aa3e0"/></svg>
<svg style="left:32.8px;top:195.9px" width="10" height="8.6" viewBox="0 0 11 11" preserveAspectRatio="none"><rect x="1" y="2" width="5" height="2.6" rx="0" fill="#ececec"/><rect x="5" y="3" width="5" height="3" rx="0" fill="#ececec"/><rect x="3.4" y="5.6" width="6" height="4.4" rx="0" fill="#4aa3e0"/><path d="M2.6 4.6 C2.6 7.6 4 8 5 8" stroke="#ececec" stroke-width="0.8" fill="none" /></svg>
<svg style="left:2.4px;top:213.60000000000002px" width="5" height="3.6" viewBox="0 0 5 3.6"><path d="M0.3 0.4 L4.7 0.4 L2.5 3.6Z" fill="#e4e4e4"/></svg>
<div class="t sec" style="left:8.8px;top:213.70000000000002px;">Modify</div>
<div class="a" style="left:38px;top:212.9px;width:5px;height:4.6px;border-radius:50%;background:#dedede;"></div>
<div class="a" style="left:39.7px;top:214.5px;width:1.6px;height:1.4px;border-radius:50%;background:#4a4a4a;"></div>
<svg style="left:2.4px;top:222.3px" width="10" height="8.6" viewBox="0 0 11 11" preserveAspectRatio="none"><path d="M5.5 1.6 V9.4 M1.6 5.5 H9.4" stroke="#ececec" stroke-width="1.1" fill="none" /><path d="M5.5 0.4 L7.2 2.6 L3.8 2.6Z M5.5 10.6 L7.2 8.4 L3.8 8.4Z M0.4 5.5 L2.6 3.8 L2.6 7.2Z M10.6 5.5 L8.4 3.8 L8.4 7.2Z" fill="#ececec"/></svg>
<svg style="left:17.6px;top:222.3px" width="10" height="8.6" viewBox="0 0 11 11" preserveAspectRatio="none"><circle cx="3.6" cy="3.2" r="1.9" fill="none" stroke="#ececec" stroke-width="1.0"/><circle cx="4.2" cy="7.6" r="2.2" fill="none" stroke="#4aa3e0" stroke-width="1.3"/><circle cx="8" cy="7.6" r="2.2" fill="none" stroke="#4aa3e0" stroke-width="1.3"/><path d="M6 3.2 L9 3.2" stroke="#ececec" stroke-width="0.8" fill="none" /></svg>
<svg style="left:32.8px;top:222.3px" width="10" height="8.6" viewBox="0 0 11 11" preserveAspectRatio="none"><path d="M5.5 1.2 L10 9.6 L1 9.6Z" fill="none" stroke="#ececec" stroke-width="1"/><path d="M5.5 3.6 L8.2 8.8 L5.5 8.8Z" fill="#4aa3e0"/><path d="M5.5 0.6 V10.4" stroke="#4aa3e0" stroke-width="0.6" fill="none" stroke-dasharray="1 1"/></svg>
<svg style="left:2.4px;top:236.5px" width="10" height="8.6" viewBox="0 0 11 11" preserveAspectRatio="none"><path d="M8.6 3 A4 4 0 1 0 9.6 6" stroke="#ececec" stroke-width="1.2" fill="none" /><path d="M6.6 0.8 L10 2.4 L7.4 4.8Z" fill="#ececec"/></svg>
<svg style="left:17.6px;top:236.5px" width="10" height="8.6" viewBox="0 0 11 11" preserveAspectRatio="none"><rect x="1.4" y="1.4" width="6" height="5.4" rx="0" fill="none" stroke="#ececec" stroke-width="0.9"/><path d="M1.4 1.4 H7.4" stroke="#ececec" stroke-width="0.9" fill="none" stroke-dasharray="1.2 .8"/><path d="M5 4.6 L10 7.4 L7.6 7.8 L6.8 10.2Z" fill="#ececec"/></svg>
<svg style="left:32.8px;top:236.5px" width="10" height="8.6" viewBox="0 0 11 11" preserveAspectRatio="none"><path d="M1.6 1.4 L9 1.4 M3 1.4 L7 9.6 M8 2 L4 6" stroke="#ececec" stroke-width="1.1" fill="none" /><path d="M7.4 6.4 L9.8 9.6" stroke="#ececec" stroke-width="0.9" fill="none" /></svg>
<svg style="left:42.0px;top:244.0px" width="2.2" height="2" viewBox="0 0 2.2 2"><path d="M2 0.2 L2 1.8 L0.2 1.8Z" fill="#b0b0b0"/></svg>
<svg style="left:2.4px;top:250.7px" width="10" height="8.6" viewBox="0 0 11 11" preserveAspectRatio="none"><path d="M1.6 9.8 L1.6 6 C1.6 3 3.4 1.6 6.4 1.6 L9.8 1.6" stroke="#4aa3e0" stroke-width="1.5" fill="none" /></svg>
<svg style="left:11.6px;top:258.2px" width="2.2" height="2" viewBox="0 0 2.2 2"><path d="M2 0.2 L2 1.8 L0.2 1.8Z" fill="#b0b0b0"/></svg>
<svg style="left:17.6px;top:250.7px" width="10" height="8.6" viewBox="0 0 11 11" preserveAspectRatio="none"><rect x="1" y="2.6" width="9" height="5.6" rx="2.8" fill="none" stroke="#ececec" stroke-width="0.9"/><rect x="3" y="4.3" width="5.6" height="2.2" rx="1.1" fill="none" stroke="#4aa3e0" stroke-width="0.9"/></svg>
<svg style="left:32.8px;top:250.7px" width="10" height="8.6" viewBox="0 0 11 11" preserveAspectRatio="none"><rect x="1" y="1" width="4" height="4" rx="0" fill="#d8e6f0"/><rect x="6" y="1" width="4" height="4" rx="0" fill="#4aa3e0"/><rect x="1" y="6" width="4" height="4" rx="0" fill="#4aa3e0"/><rect x="6" y="6" width="4" height="4" rx="0" fill="#d8e6f0"/></svg>
<svg style="left:42.0px;top:258.2px" width="2.2" height="2" viewBox="0 0 2.2 2"><path d="M2 0.2 L2 1.8 L0.2 1.8Z" fill="#b0b0b0"/></svg>
<svg style="left:2.4px;top:264.7px" width="10" height="8.6" viewBox="0 0 11 11" preserveAspectRatio="none"><rect x="1" y="3.6" width="6.6" height="6" rx="1" fill="none" stroke="#4aa3e0" stroke-width="1.2"/><path d="M1.4 3.6 L3.8 1.2 L10 1.2 L10 7 L7.6 9.4 M7.6 3.6 L10 1.2" stroke="#ececec" stroke-width="0.9" fill="none" /></svg>
<svg style="left:17.6px;top:264.7px" width="10" height="8.6" viewBox="0 0 11 11" preserveAspectRatio="none"><path d="M1.6 1 L5 1 L5 10 L1.6 10Z" fill="none" stroke="#ececec" stroke-width=".9"/><path d="M6 1 L6 10 L9.8 8.4 L7.6 1Z" fill="#ececec"/></svg>
<svg style="left:32.8px;top:264.7px" width="10" height="8.6" viewBox="0 0 11 11" preserveAspectRatio="none"><rect x="1" y="1" width="5.4" height="5" rx="0" fill="#ececec"/><rect x="4.6" y="4.6" width="5.6" height="5.4" rx="0" fill="#4aa3e0"/><rect x="1.8" y="6.4" width="2.2" height="3" rx="0" fill="#ececec"/></svg>
<svg style="left:2.4px;top:278.9px" width="10" height="8.6" viewBox="0 0 11 11" preserveAspectRatio="none"><rect x="1" y="1" width="9" height="9" rx="1" fill="none" stroke="#ececec" stroke-width="1.0"/><rect x="2.8" y="4.2" width="4.8" height="4.6" rx="0" fill="none" stroke="#4aa3e0" stroke-width="1.1"/></svg>
<svg style="left:17.6px;top:278.9px" width="10" height="8.6" viewBox="0 0 11 11" preserveAspectRatio="none"><path d="M1.6 9.4 L9.4 1.6" stroke="#ececec" stroke-width="0.9" fill="none" /><circle cx="3.6" cy="7.4" r="1.1" fill="#4aa3e0"/><circle cx="7.4" cy="3.6" r="1.1" fill="#4aa3e0"/><path d="M1 3 L3 1" stroke="#a0a0a0" stroke-width="0.7" fill="none" /></svg>
<svg style="left:26.8px;top:286.4px" width="2.2" height="2" viewBox="0 0 2.2 2"><path d="M2 0.2 L2 1.8 L0.2 1.8Z" fill="#b0b0b0"/></svg>
<svg style="left:32.8px;top:278.9px" width="10" height="8.6" viewBox="0 0 11 11" preserveAspectRatio="none"><path d="M1 5.5 H4.4 M6.6 5.5 H10" stroke="#4aa3e0" stroke-width="1.6" fill="none" /><circle cx="5.5" cy="5.5" r="0.6" fill="#4aa3e0"/></svg>
<svg style="left:2.4px;top:293.1px" width="10" height="8.6" viewBox="0 0 11 11" preserveAspectRatio="none"><rect x="1" y="1.6" width="9" height="8" rx="0" fill="#ececec"/><rect x="2" y="4" width="3.2" height="2.4" rx="0" fill="#5a5a5a"/><rect x="5.8" y="4" width="3.2" height="4.4" rx="0" fill="#5a5a5a"/><path d="M2 2.8 H9" stroke="#5a5a5a" stroke-width="0.7" fill="none" /></svg>
<svg style="left:17.6px;top:293.1px" width="10" height="8.6" viewBox="0 0 11 11" preserveAspectRatio="none"><rect x="1" y="1" width="5.6" height="3" rx="0" fill="#ececec"/><rect x="2.2" y="3.4" width="5.6" height="5.2" rx="0" fill="#ececec"/><rect x="2.8" y="4.2" width="4.2" height="3.4" rx="0" fill="none" stroke="#5a5a5a" stroke-width="0.6"/><circle cx="8" cy="8.2" r="2" fill="#4aa3e0"/></svg>
<svg style="left:32.8px;top:293.1px" width="10" height="8.6" viewBox="0 0 11 11" preserveAspectRatio="none"><path d="M5.5 0.8 V5.4" stroke="#e8b12a" stroke-width="1.2" fill="none" /><path d="M2.6 10 L3.6 5.4 L7.4 5.4 L8.4 10Z" fill="#e0a72a"/></svg>
<svg style="left:2.4px;top:311.2px" width="5" height="3.6" viewBox="0 0 5 3.6"><path d="M0.3 0.4 L4.7 0.4 L2.5 3.6Z" fill="#e4e4e4"/></svg>
<div class="t sec" style="left:8.8px;top:311.29999999999995px;">Text</div>
<div class="a" style="left:38px;top:310.5px;width:5px;height:4.6px;border-radius:50%;background:#dedede;"></div>
<div class="a" style="left:39.7px;top:312.09999999999997px;width:1.6px;height:1.4px;border-radius:50%;background:#4a4a4a;"></div>
<svg style="left:2.4px;top:319.7px" width="10" height="8.6" viewBox="0 0 11 11" preserveAspectRatio="none"><path transform="translate(0.6 0.4) scale(0.9)" d="M0.6 10 L4.3 1 L6.7 1 L10.4 10 L8.2 10 L7.4 7.9 L3.6 7.9 L2.8 10Z M4.2 6.2 L6.8 6.2 L5.5 2.8Z" fill="#ececec" fill-rule="evenodd"/></svg>
<svg style="left:17.6px;top:319.7px" width="10" height="8.6" viewBox="0 0 11 11" preserveAspectRatio="none"><path transform="translate(0 0.2) scale(0.84)" d="M0.6 10 L4.3 1 L6.7 1 L10.4 10 L8.2 10 L7.4 7.9 L3.6 7.9 L2.8 10Z M4.2 6.2 L6.8 6.2 L5.5 2.8Z" fill="#ececec" fill-rule="evenodd"/><path d="M6.2 10 L10 6.2" stroke="#e8b12a" stroke-width="1.5" fill="none" /></svg>
<svg style="left:32.8px;top:319.7px" width="10" height="8.6" viewBox="0 0 11 11" preserveAspectRatio="none"><path transform="translate(1.4 0) scale(0.76)" d="M0.6 10 L4.3 1 L6.7 1 L10.4 10 L8.2 10 L7.4 7.9 L3.6 7.9 L2.8 10Z M4.2 6.2 L6.8 6.2 L5.5 2.8Z" fill="#ececec" fill-rule="evenodd"/><path d="M1 9.6 H3.6 M7.4 9.6 H10" stroke="#4aa3e0" stroke-width="1.4" fill="none" /><path d="M2.4 8.2 H8.6" stroke="#4aa3e0" stroke-width="0.8" fill="none" /></svg>
<svg style="left:2.4px;top:333.5px" width="10" height="8.6" viewBox="0 0 11 11" preserveAspectRatio="none"><rect x="0.8" y="1.4" width="7.6" height="5.6" rx="0" fill="#ececec"/><path d="M2 3.2 H7 M2 5 H6" stroke="#555" stroke-width="0.7" fill="none" /><path d="M6 6.4 L9.8 10.2 M9.6 7 L6.8 10" stroke="#ececec" stroke-width="1.0" fill="none" /></svg>
<svg style="left:17.6px;top:333.5px" width="10" height="8.6" viewBox="0 0 11 11" preserveAspectRatio="none"><text x="0.6" y="4.6" font-size="4.6" font-weight="bold" fill="#ececec" font-family="Liberation Sans">ABC</text><path d="M1.6 7.6 L4.2 10 L9.6 5.2" stroke="#3fae62" stroke-width="1.5" fill="none" /></svg>
<svg style="left:32.8px;top:333.5px" width="10" height="8.6" viewBox="0 0 11 11" preserveAspectRatio="none"><circle cx="4.6" cy="4.6" r="3.4" fill="none" stroke="#ececec" stroke-width="1.0"/><path d="M7 7 L10.2 10.2" stroke="#e8b12a" stroke-width="1.4" fill="none" /><text x="2.8" y="6" font-size="3.6" font-weight="bold" fill="#ececec" font-family="Liberation Sans">A</text></svg>
<svg style="left:2.4px;top:347.5px" width="10" height="8.6" viewBox="0 0 11 11" preserveAspectRatio="none"><rect x="0.8" y="1" width="5.6" height="5" rx="0" fill="#ececec"/><rect x="4.4" y="2.2" width="5.8" height="4.4" rx="0" fill="#4aa3e0"/><rect x="1.6" y="6.6" width="8.4" height="3.6" rx="0" fill="#ececec"/><path d="M2.4 8.4 H9" stroke="#4aa3e0" stroke-width="0.8" fill="none" /></svg>
<svg style="left:17.6px;top:347.5px" width="10" height="8.6" viewBox="0 0 11 11" preserveAspectRatio="none"><rect x="1" y="4.4" width="8.6" height="5.8" rx="0" fill="#4aa3e0"/><rect x="2" y="2" width="4" height="3" rx="0" fill="#ececec"/><circle cx="8" cy="2.6" r="1.8" fill="#3fae62"/><path d="M2 8 H8.6" stroke="#ececec" stroke-width="0.8" fill="none" /></svg>
<svg style="left:32.8px;top:347.5px" width="10" height="8.6" viewBox="0 0 11 11" preserveAspectRatio="none"><text x="1.4" y="4.2" font-size="3.6" font-weight="bold" fill="#d8d8d8" font-family="Liberation Sans">PDF</text><path d="M2.4 5.4 C2.4 8 4 8.4 5.2 8.4" stroke="#ececec" stroke-width="0.8" fill="none" /><path d="M5.6 10 L7.6 4.6 L9.8 10 M6.4 8.4 H9" stroke="#4aa3e0" stroke-width="1" fill="none"/></svg>
<svg style="left:2.4px;top:361.5px" width="10" height="8.6" viewBox="0 0 11 11" preserveAspectRatio="none"><text x="0.6" y="4" font-size="3.6" font-weight="bold" fill="#d8d8d8" font-family="Liberation Sans">PDF</text><path d="M2 5.2 C2 8 3.6 8.4 5 8.4" stroke="#ececec" stroke-width="0.8" fill="none" /><path d="M5 6.4 L9.8 8.4 L5 10.4Z" fill="#4aa3e0"/></svg>
<svg style="left:2.4px;top:379.6px" width="5" height="3.6" viewBox="0 0 5 3.6"><path d="M0.3 0.4 L4.7 0.4 L2.5 3.6Z" fill="#e4e4e4"/></svg>
<div class="t sec" style="left:8.8px;top:379.7px;">Dimension</div>
<div class="a" style="left:38px;top:378.90000000000003px;width:5px;height:4.6px;border-radius:50%;background:#dedede;"></div>
<div class="a" style="left:39.7px;top:380.5px;width:1.6px;height:1.4px;border-radius:50%;background:#4a4a4a;"></div>
<svg style="left:2.4px;top:387.9px" width="10" height="8.6" viewBox="0 0 11 11" preserveAspectRatio="none"><path d="M1.2 1.6 V9.6 M9.8 1.6 V9.6" stroke="#ececec" stroke-width="1.0" fill="none" /><path d="M1.2 3 C4 6 7 6 9.8 3" stroke="#e78a2c" stroke-width="1.0" fill="none" /><path d="M1.2 8.4 C4 5.4 7 5.4 9.8 8.4" stroke="#e78a2c" stroke-width="1.0" fill="none" /></svg>
<svg style="left:17.6px;top:387.9px" width="10" height="8.6" viewBox="0 0 11 11" preserveAspectRatio="none"><path d="M1 8.6 L10 8.6 M1 8.6 L9.4 3" stroke="#ececec" stroke-width="0.9" fill="none" /><path d="M2 6 L9 6" stroke="#e78a2c" stroke-width="1.0" fill="none" /><path d="M1 6 L3 5 L3 7Z M10 6 L8 5 L8 7Z" fill="#ececec"/></svg>
<svg style="left:32.8px;top:387.9px" width="10" height="8.6" viewBox="0 0 11 11" preserveAspectRatio="none"><path d="M1.4 1.6 V9.6 M9.6 1.6 V9.6" stroke="#ececec" stroke-width="1.1" fill="none" /><path d="M2 4.6 H9" stroke="#4aa3e0" stroke-width="1.3" fill="none" /></svg>
<svg style="left:42.0px;top:395.4px" width="2.2" height="2" viewBox="0 0 2.2 2"><path d="M2 0.2 L2 1.8 L0.2 1.8Z" fill="#b0b0b0"/></svg>
<svg style="left:2.4px;top:401.7px" width="10" height="8.6" viewBox="0 0 11 11" preserveAspectRatio="none"><path d="M1.2 2 V9.6 M4.2 2 V9.6 M7 2 V9.6 M9.8 2 V9.6" stroke="#ececec" stroke-width="0.9" fill="none" /><path d="M1.2 4.6 H9.8" stroke="#4aa3e0" stroke-width="1.1" fill="none" /></svg>
<svg style="left:11.6px;top:409.2px" width="2.2" height="2" viewBox="0 0 2.2 2"><path d="M2 0.2 L2 1.8 L0.2 1.8Z" fill="#b0b0b0"/></svg>
<svg style="left:17.6px;top:401.7px" width="10" height="8.6" viewBox="0 0 11 11" preserveAspectRatio="none"><circle cx="5.5" cy="5.5" r="4.2" fill="none" stroke="#ececec" stroke-width="1.0"/><circle cx="5.5" cy="5.5" r="1.2" fill="#4aa3e0"/></svg>
<svg style="left:26.8px;top:409.2px" width="2.2" height="2" viewBox="0 0 2.2 2"><path d="M2 0.2 L2 1.8 L0.2 1.8Z" fill="#b0b0b0"/></svg>
<svg style="left:32.8px;top:401.7px" width="10" height="8.6" viewBox="0 0 11 11" preserveAspectRatio="none"><rect x="0.8" y="2.4" width="9.4" height="6.4" rx="1" fill="#ececec"/><path d="M2 5.6 H5.4" stroke="#555" stroke-width="1.0" fill="none" /><path d="M5 4 L7.4 5.6 L5 7.2Z" fill="#555"/><path d="M8.2 4 V7.4" stroke="#555" stroke-width="0.8" fill="none" /></svg>
<div class="t" style="left:53.2px;top:37.2px;font-size:5.2px;font-weight:bold;color:#8d939b;">&#8211;</div>
<div class="a" style="left:62.2px;top:36.6px;width:.8px;height:6.6px;background:#8d939b;"></div>
<div class="t" style="left:66.6px;top:37.2px;font-size:5.3px;font-weight:bold;color:#8d939b;letter-spacing:.1px;">Top</div>
<div class="a" style="left:80px;top:36.6px;width:.8px;height:6.6px;background:#8d939b;"></div>
<div class="t" style="left:84.2px;top:37.2px;font-size:5.3px;font-weight:bold;color:#8d939b;letter-spacing:.1px;">2D Wireframe</div>
<svg style="left:761.8px;top:39.8px" width="68" height="62" viewBox="0 0 68 62"><ellipse cx="33.9" cy="31.2" rx="27.4" ry="24.2" fill="none" stroke="#545a63" stroke-width="6.6"/><rect x="20.6" y="19" width="26" height="23.4" fill="#c3c5c8"/><rect x="23.2" y="21.4" width="20.8" height="18.6" fill="#b1b4b9"/></svg>
<div class="a" style="left:795.7px;top:45.0px;width:0;height:0;"><div style="position:absolute;white-space:nowrap;line-height:1;font-size:10.8px;font-weight:bold;color:#e6e6e6;transform:translate(-50%,-50%) scaleX(1.0);">N</div></div>
<div class="a" style="left:795.8px;top:95.0px;width:0;height:0;"><div style="position:absolute;white-space:nowrap;line-height:1;font-size:10.8px;font-weight:bold;color:#e6e6e6;transform:translate(-50%,-50%) scaleX(1.0);">S</div></div>
<div class="a" style="left:768.0px;top:70.3px;width:0;height:0;"><div style="position:absolute;white-space:nowrap;line-height:1;font-size:10.8px;font-weight:bold;color:#e6e6e6;transform:translate(-50%,-50%) scaleX(1.0);">W</div></div>
<div class="a" style="left:824.2px;top:70.5px;width:0;height:0;"><div style="position:absolute;white-space:nowrap;line-height:1;font-size:10.8px;font-weight:bold;color:#e6e6e6;transform:translate(-50%,-50%) scaleX(1.0);">E</div></div>
<div class="a" style="left:796.2px;top:70.2px;width:0;height:0;"><div style="position:absolute;white-space:nowrap;line-height:1;font-size:6.8px;font-weight:bold;color:#4c5159;transform:translate(-50%,-50%) scaleX(0.86);">TOP</div></div>
<div class="a" style="left:783.4px;top:110.2px;width:24.6px;height:5px;border-radius:2.5px;background:#59606a;"></div>
<div class="a" style="left:791.4px;top:112.6px;width:0;height:0;"><div style="position:absolute;white-space:nowrap;line-height:1;font-size:4.6px;font-weight:bold;color:#d4d6d9;transform:translate(-50%,-50%) scaleX(1.12);">WCS</div></div>
<svg style="left:799px;top:111.6px" width="6" height="3" viewBox="0 0 6 3"><path d="M0.6 0.4 L5.4 0.4 L3 2.6Z" fill="#8f959c"/></svg>
<svg style="left:50px;top:370px" width="44" height="40" viewBox="0 0 44 40"><path d="M6.2 11.4 V33.6 H32.2" stroke="#c9ccd0" stroke-width=".9" fill="none"/><rect x="4.2" y="31.6" width="4" height="4" fill="none" stroke="#c9ccd0" stroke-width=".8"/><path d="M7.6 2.8 L10 6 L12.4 2.8 M10 6 V9.6" stroke="#c9ccd0" stroke-width=".8" fill="none"/><path d="M34.4 27.6 L40 33.4 M40 27.6 L34.4 33.4" stroke="#c9ccd0" stroke-width=".8" fill="none"/></svg>
<div id="right" class="a"></div>
<div class="a" style="left:837px;top:34px;width:13px;height:139px;background:#525252;"></div>
<div class="a" style="left:837px;top:173px;width:13px;height:113px;background:#4b4b4b;"></div>
<div class="a" style="left:837px;top:286px;width:13px;height:128px;background:#565656;"></div>
<div class="a" style="left:837px;top:172.6px;width:13px;height:.8px;background:#434343;"></div>
<div class="a" style="left:837px;top:285.6px;width:13px;height:.8px;background:#434343;"></div>
<div class="a" style="left:837px;top:34px;width:1px;height:380px;background:#3d3f42;"></div>
<div class="a" style="left:843.3px;top:96.75px;width:0;height:0;"><div style="position:absolute;white-space:nowrap;line-height:1;font-size:5.55px;color:#e4e4e4;transform:translate(-50%,-50%) rotate(-90deg) scaleY(1.1);">Layers and Properties</div></div>
<div class="a" style="left:843.1px;top:223.4px;width:0;height:0;"><div style="position:absolute;white-space:nowrap;line-height:1;font-size:5.6px;color:#e4e4e4;transform:translate(-50%,-50%) rotate(-90deg) scaleY(1.1);">Reference Manager</div></div>
<div class="a" style="left:843.1px;top:349.5px;width:0;height:0;"><div style="position:absolute;white-space:nowrap;line-height:1;font-size:5.9px;color:#e4e4e4;transform:translate(-50%,-50%) rotate(-90deg) scaleY(1.1);">Content</div></div>
<div id="dlg" class="a" style="left:289.4px;top:53px;width:271px;height:212.8px;">
<div id="dlgtitle" class="a"></div>
<div class="a" style="left:0;top:9.6px;width:271px;height:.5px;background:#b8b8b8;"></div>
<div class="a" style="left:4.2px;top:2.4px;width:6.2px;height:5.6px;border-radius:50%;background:#fc5b57;box-shadow:0 0 0 .4px #df3e3a;"></div>
<div class="a" style="left:14.3px;top:2.4px;width:6.2px;height:5.6px;border-radius:50%;background:#cfcfcf;box-shadow:0 0 0 .4px #b9b9b9;"></div>
<div class="a" style="left:24.5px;top:2.4px;width:6.2px;height:5.6px;border-radius:50%;background:#2fc840;box-shadow:0 0 0 .4px #24a732;"></div>
<div class="t" style="left:119.9px;top:2.23px;font-size:6.2px;color:#303030;">Text Style</div>
<div id="preview" class="a" style="top:9.8px;height:56.4px;"></div>
<div class="a" style="left:0;top:66.6px;width:271px;height:8.6px;background:#f5f5f5;"></div>
<div class="a" style="left:0;top:75.2px;width:271px;height:.6px;background:#dedede;"></div>
<div class="t" style="left:45.2px;top:67.26px;font-size:6.15px;color:#a9a9a9;">NASKHD.SHX&nbsp;&nbsp; fonts-(www.disamag.com) (82).shx&nbsp;&nbsp; 0.0000</div>
<div class="a btn" style="left:46.6px;top:78.2px;width:15.5px;height:10.2px;border-radius:1px;border:none;box-shadow:0 0 0 .5px #dadada,0 .6px .8px rgba(0,0,0,.18);"></div>
<div class="a btn" style="left:65.5px;top:78.2px;width:15.4px;height:10.2px;border-radius:1px;border:none;box-shadow:0 0 0 .5px #dadada,0 .6px .8px rgba(0,0,0,.18);"></div>
<div class="a btn" style="left:84.1px;top:78.2px;width:15.9px;height:10.2px;border-radius:1px;border:none;box-shadow:0 0 0 .5px #dadada,0 .6px .8px rgba(0,0,0,.18);"></div>
<div class="a btn" style="left:103.2px;top:78.2px;width:15.9px;height:10.2px;border-radius:1px;border:none;box-shadow:0 0 0 .5px #dadada,0 .6px .8px rgba(0,0,0,.18);"></div>
<div class="a btn" style="left:122.6px;top:78.2px;width:16px;height:10.2px;border-radius:1px;border:none;box-shadow:0 0 0 .5px #dadada,0 .6px .8px rgba(0,0,0,.18);"></div>
<svg style="left:51.6px;top:81.3px" width="5.6" height="4.8" viewBox="0 0 5.6 4.8"><path d="M2.8 0.3 L2.8 2.4 M2.8 2.2 L0.6 4.5 M2.8 2.2 L5 4.5" stroke="#2a7fd6" stroke-width="1.3" fill="none"/></svg>
<svg style="left:69.2px;top:80.2px" width="8.4" height="6.6" viewBox="0 0 8.4 6.6"><rect x="0.4" y="0.4" width="7" height="5.6" fill="#d6d6d6"/><path d="M1.4 1.4 L5.4 5 M1.4 4.8 H4" stroke="#a4a4a4" stroke-width=".8" fill="none"/><circle cx="6.6" cy="5.2" r="1.1" fill="#e6b84a"/></svg>
<svg style="left:87.4px;top:79.8px" width="10" height="7.4" viewBox="0 0 10 7.4"><path d="M1 1.4 H9" stroke="#3b86d6" stroke-width=".9"/><text x="1.6" y="6.2" font-size="4.2" fill="#8a8a8a" font-family="Liberation Sans" font-weight="bold">AFC</text></svg>
<svg style="left:106.6px;top:79.8px" width="10" height="7.4" viewBox="0 0 10 7.4"><path d="M1 6.8 H9" stroke="#3b86d6" stroke-width=".9"/><text x="1.4" y="5.2" font-size="4.2" fill="#8a8a8a" font-family="Liberation Sans" font-weight="bold">HfA</text></svg>
<svg style="left:127.2px;top:79.4px" width="8" height="8" viewBox="0 0 8 8"><path d="M2.6 0.6 V7.4" stroke="#3b86d6" stroke-width="1"/><path d="M4 1.4 L5.6 1.4 M4 3.2 L6 3.2 M4 5 L5.6 5 M4 6.6 L6 6.6" stroke="#9a9a9a" stroke-width=".8"/></svg>
<div class="a fld" style="left:141.3px;top:78.8px;width:26.4px;height:9.2px;"></div>
<div class="t" style="left:144.0px;top:81.35px;font-size:5.8px;color:#222;">0.0000</div>
<svg style="left:169.3px;top:79.7px" width="3.4" height="7.6" viewBox="0 0 3.4 7.6"><path d="M0.5 2.8 L1.7 1.2 L2.9 2.8 M0.5 4.8 L1.7 6.4 L2.9 4.8" stroke="#555" stroke-width=".8" fill="none"/></svg>
<div class="t" style="left:178.6px;top:81.48px;font-size:5.4px;color:#222;">Text height</div>
<div class="t" style="left:54.4px;top:94.12px;font-size:5.5px;color:#222;">Width factor:</div>
<div class="a fld" style="left:93.0px;top:91.8px;width:26.2px;height:9.2px;"></div>
<div class="t" style="left:95.4px;top:94.26px;font-size:5.6px;color:#222;">1.0000</div>
<svg style="left:120.9px;top:92.5px" width="3.4" height="7.6" viewBox="0 0 3.4 7.6"><path d="M0.5 2.8 L1.7 1.2 L2.9 2.8 M0.5 4.8 L1.7 6.4 L2.9 4.8" stroke="#555" stroke-width=".8" fill="none"/></svg>
<div class="t" style="left:140.2px;top:93.43px;font-size:5.3px;color:#222;">Angle:</div>
<div class="a fld" style="left:160.5px;top:91.6px;width:25.2px;height:9.2px;"></div>
<div class="t" style="left:163.0px;top:94.15px;font-size:5.8px;color:#222;">0.0000</div>
<div class="a" style="left:188.8px;top:92.4px;width:9px;height:8px;border-radius:50%;background:#fff;box-shadow:0 0 0 .5px #dadada;"></div>
<div class="a" style="left:192.5px;top:97px;width:2px;height:1.8px;border-radius:50%;background:#222;"></div>
<div class="t" style="left:3.8px;top:105.79px;font-size:5.2px;color:#222;font-weight:bold;">Styles</div>
<div class="t" style="left:107.6px;top:105.79px;font-size:5.2px;color:#222;font-weight:bold;">Family</div>
<div class="t" style="left:188.3px;top:105.79px;font-size:5.2px;color:#222;font-weight:bold;">Asian set</div>
<div class="a lst" style="left:1.9px;top:111.6px;width:103.6px;height:71.80000000000001px;">
<div class="a" style="left:0;top:60.8px;width:97px;height:7.8px;background:#d6d6d6;"></div>
<div class="t" style="left:19.8px;top:2.34px;font-size:6.0px;color:#1d1d1d;">civillir</div>
<div class="t" style="left:19.8px;top:11.04px;font-size:6.0px;color:#1d1d1d;">NASKH</div>
<div class="t" style="left:19.8px;top:19.44px;font-size:6.0px;color:#1d1d1d;">NASKHN</div>
<div class="t" style="left:19.8px;top:27.94px;font-size:6.0px;color:#1d1d1d;">NASKHS</div>
<div class="t" style="left:19.8px;top:36.34px;font-size:6.0px;color:#1d1d1d;">ROMANS</div>
<div class="t" style="left:19.8px;top:44.84px;font-size:6.0px;color:#1d1d1d;">ROMANT</div>
<div class="t" style="left:19.8px;top:53.24px;font-size:6.0px;color:#1d1d1d;">SADE</div>
<div class="t" style="left:19.8px;top:61.74px;font-size:6.0px;color:#1d1d1d;">Standard</div>
<svg style="left:2.1px;top:2.3px" width="4.6" height="6" viewBox="0 0 4.6 6"><path d="M0.7 0.5 L3.8 3 L0.7 5.5" stroke="#555" stroke-width=".9" fill="none"/></svg>
<div class="a" style="left:96.7px;top:0;width:6px;height:72px;background:#fafafa;border-left:.5px solid #e4e4e4;"></div>
<div class="a" style="left:98.1px;top:9.7px;width:3px;height:40.8px;border-radius:1.5px;background:#b4b4b4;"></div>
</div>
<div class="a lst" style="left:107.4px;top:111.6px;width:80.4px;height:71.80000000000001px;">
<div class="a" style="left:0;top:37.1px;width:73.6px;height:7px;background:#d4d4d4;"></div>
<div class="t" style="left:8.4px;top:-4.18px;font-size:5.5px;color:#1d1d1d;">Mshtakan</div>
<svg style="left:0.6px;top:-5.4px" width="6" height="6" viewBox="0 0 6 6"><path d="M0.4 0.8 H3.6 M2 0.8 V4.6" stroke="#666" stroke-width=".8"/><path d="M3.2 2.4 H5.8 M4.5 2.4 V5.8" stroke="#2a7fd6" stroke-width="1"/></svg>
<svg style="left:67.2px;top:-4.6px" width="3.4" height="4" viewBox="0 0 3.4 4"><path d="M0.2 0.2 L3.2 2 L0.2 3.8Z" fill="#111"/></svg>
<div class="t" style="left:8.4px;top:3.02px;font-size:5.5px;color:#1d1d1d;">Nadeem</div>
<svg style="left:0.6px;top:1.8px" width="6" height="6" viewBox="0 0 6 6"><path d="M0.4 0.8 H3.6 M2 0.8 V4.6" stroke="#666" stroke-width=".8"/><path d="M3.2 2.4 H5.8 M4.5 2.4 V5.8" stroke="#2a7fd6" stroke-width="1"/></svg>
<svg style="left:67.2px;top:2.6px" width="3.4" height="4" viewBox="0 0 3.4 4"><path d="M0.2 0.2 L3.2 2 L0.2 3.8Z" fill="#111"/></svg>
<div class="t" style="left:8.4px;top:10.22px;font-size:5.5px;color:#1d1d1d;">NASIM.SHX</div>
<svg style="left:0.4px;top:9.4px" width="7.4" height="5" viewBox="0 0 7.4 5"><text x="0" y="4.3" font-size="4.5" fill="#757575" font-family="Liberation Sans" textLength="7.6" lengthAdjust="spacingAndGlyphs">SHX</text></svg>
<svg style="left:67.2px;top:9.8px" width="3.4" height="4" viewBox="0 0 3.4 4"><path d="M0.2 0.2 L3.2 2 L0.2 3.8Z" fill="#111"/></svg>
<div class="t" style="left:8.4px;top:17.42px;font-size:5.5px;color:#1d1d1d;">NASKH-C.SHX</div>
<svg style="left:0.4px;top:16.6px" width="7.4" height="5" viewBox="0 0 7.4 5"><text x="0" y="4.3" font-size="4.5" fill="#757575" font-family="Liberation Sans" textLength="7.6" lengthAdjust="spacingAndGlyphs">SHX</text></svg>
<svg style="left:67.2px;top:17.0px" width="3.4" height="4" viewBox="0 0 3.4 4"><path d="M0.2 0.2 L3.2 2 L0.2 3.8Z" fill="#111"/></svg>
<div class="t" style="left:8.4px;top:24.62px;font-size:5.5px;color:#1d1d1d;">NASKH-H.SHX</div>
<svg style="left:0.4px;top:23.8px" width="7.4" height="5" viewBox="0 0 7.4 5"><text x="0" y="4.3" font-size="4.5" fill="#757575" font-family="Liberation Sans" textLength="7.6" lengthAdjust="spacingAndGlyphs">SHX</text></svg>
<svg style="left:67.2px;top:24.2px" width="3.4" height="4" viewBox="0 0 3.4 4"><path d="M0.2 0.2 L3.2 2 L0.2 3.8Z" fill="#111"/></svg>
<div class="t" style="left:8.4px;top:31.72px;font-size:5.5px;color:#1d1d1d;">NASKH-S.SHX</div>
<svg style="left:0.4px;top:30.9px" width="7.4" height="5" viewBox="0 0 7.4 5"><text x="0" y="4.3" font-size="4.5" fill="#757575" font-family="Liberation Sans" textLength="7.6" lengthAdjust="spacingAndGlyphs">SHX</text></svg>
<svg style="left:67.2px;top:31.3px" width="3.4" height="4" viewBox="0 0 3.4 4"><path d="M0.2 0.2 L3.2 2 L0.2 3.8Z" fill="#111"/></svg>
<div class="t" style="left:8.4px;top:38.82px;font-size:5.5px;color:#1d1d1d;">NASKHD.SHX</div>
<svg style="left:0.4px;top:38.0px" width="7.4" height="5" viewBox="0 0 7.4 5"><text x="0" y="4.3" font-size="4.5" fill="#757575" font-family="Liberation Sans" textLength="7.6" lengthAdjust="spacingAndGlyphs">SHX</text></svg>
<svg style="left:67.2px;top:38.4px" width="3.4" height="4" viewBox="0 0 3.4 4"><path d="M0.2 0.2 L3.2 2 L0.2 3.8Z" fill="#111"/></svg>
<div class="t" style="left:8.4px;top:46.02px;font-size:5.5px;color:#1d1d1d;">NASKHD2.SHX</div>
<svg style="left:0.4px;top:45.2px" width="7.4" height="5" viewBox="0 0 7.4 5"><text x="0" y="4.3" font-size="4.5" fill="#757575" font-family="Liberation Sans" textLength="7.6" lengthAdjust="spacingAndGlyphs">SHX</text></svg>
<svg style="left:67.2px;top:45.6px" width="3.4" height="4" viewBox="0 0 3.4 4"><path d="M0.2 0.2 L3.2 2 L0.2 3.8Z" fill="#111"/></svg>
<div class="t" style="left:8.4px;top:53.12px;font-size:5.5px;color:#1d1d1d;">NASKHEC.SHX</div>
<svg style="left:0.4px;top:52.3px" width="7.4" height="5" viewBox="0 0 7.4 5"><text x="0" y="4.3" font-size="4.5" fill="#757575" font-family="Liberation Sans" textLength="7.6" lengthAdjust="spacingAndGlyphs">SHX</text></svg>
<svg style="left:67.2px;top:52.7px" width="3.4" height="4" viewBox="0 0 3.4 4"><path d="M0.2 0.2 L3.2 2 L0.2 3.8Z" fill="#111"/></svg>
<div class="t" style="left:8.4px;top:60.32px;font-size:5.5px;color:#1d1d1d;">NASKHES.SHX</div>
<svg style="left:0.4px;top:59.5px" width="7.4" height="5" viewBox="0 0 7.4 5"><text x="0" y="4.3" font-size="4.5" fill="#757575" font-family="Liberation Sans" textLength="7.6" lengthAdjust="spacingAndGlyphs">SHX</text></svg>
<svg style="left:67.2px;top:59.9px" width="3.4" height="4" viewBox="0 0 3.4 4"><path d="M0.2 0.2 L3.2 2 L0.2 3.8Z" fill="#111"/></svg>
<div class="t" style="left:8.4px;top:67.52px;font-size:5.5px;color:#1d1d1d;">NASKHFSH.SHX</div>
<svg style="left:0.4px;top:66.7px" width="7.4" height="5" viewBox="0 0 7.4 5"><text x="0" y="4.3" font-size="4.5" fill="#757575" font-family="Liberation Sans" textLength="7.6" lengthAdjust="spacingAndGlyphs">SHX</text></svg>
<svg style="left:67.2px;top:67.1px" width="3.4" height="4" viewBox="0 0 3.4 4"><path d="M0.2 0.2 L3.2 2 L0.2 3.8Z" fill="#111"/></svg>
<div class="a" style="left:72.8px;top:0;width:6px;height:72px;background:#fafafa;border-left:.5px solid #e4e4e4;"></div>
<div class="a" style="left:74.2px;top:56.0px;width:3px;height:7px;border-radius:1.5px;background:#a8a8a8;"></div>
</div>
<div class="a lst" style="left:189.2px;top:111.6px;width:79.8px;height:71.80000000000001px;">
<div class="a" style="left:-0.3px;top:43.2px;width:71.2px;height:7px;background:#1f5fd9;"></div>
<div class="t" style="left:0.6px;top:2.22px;font-size:5.5px;color:#1d1d1d;">none</div>
<div class="t" style="left:8.3px;top:9.42px;font-size:5.5px;color:#1d1d1d;">fonts-(www.disama...</div>
<svg style="left:0.3px;top:8.7px" width="7.4" height="5" viewBox="0 0 7.4 5"><text x="0" y="4.3" font-size="4.5" fill="#757575" font-family="Liberation Sans" textLength="7.6" lengthAdjust="spacingAndGlyphs">SHX</text></svg>
<div class="t" style="left:8.3px;top:16.52px;font-size:5.5px;color:#1d1d1d;">fonts-(www.disama...</div>
<svg style="left:0.3px;top:15.8px" width="7.4" height="5" viewBox="0 0 7.4 5"><text x="0" y="4.3" font-size="4.5" fill="#757575" font-family="Liberation Sans" textLength="7.6" lengthAdjust="spacingAndGlyphs">SHX</text></svg>
<div class="t" style="left:8.3px;top:23.62px;font-size:5.5px;color:#1d1d1d;">spec_bar.shx</div>
<svg style="left:0.3px;top:22.9px" width="7.4" height="5" viewBox="0 0 7.4 5"><text x="0" y="4.3" font-size="4.5" fill="#757575" font-family="Liberation Sans" textLength="7.6" lengthAdjust="spacingAndGlyphs">SHX</text></svg>
<div class="t" style="left:8.3px;top:30.72px;font-size:5.5px;color:#1d1d1d;">fonts-(www.disama...</div>
<svg style="left:0.3px;top:30.0px" width="7.4" height="5" viewBox="0 0 7.4 5"><text x="0" y="4.3" font-size="4.5" fill="#757575" font-family="Liberation Sans" textLength="7.6" lengthAdjust="spacingAndGlyphs">SHX</text></svg>
<div class="t" style="left:8.3px;top:37.82px;font-size:5.5px;color:#1d1d1d;">fonts-(www.disama...</div>
<svg style="left:0.3px;top:37.1px" width="7.4" height="5" viewBox="0 0 7.4 5"><text x="0" y="4.3" font-size="4.5" fill="#757575" font-family="Liberation Sans" textLength="7.6" lengthAdjust="spacingAndGlyphs">SHX</text></svg>
<div class="t" style="left:8.3px;top:44.82px;font-size:5.5px;color:#fff;">fonts-(www.disama...</div>
<svg style="left:0.3px;top:44.1px" width="7.4" height="5" viewBox="0 0 7.4 5"><text x="0" y="4.3" font-size="4.5" fill="#6f93d6" font-family="Liberation Sans" textLength="7.6" lengthAdjust="spacingAndGlyphs">SHX</text></svg>
<div class="t" style="left:8.3px;top:51.92px;font-size:5.5px;color:#1d1d1d;">fonts-(www.disama...</div>
<svg style="left:0.3px;top:51.2px" width="7.4" height="5" viewBox="0 0 7.4 5"><text x="0" y="4.3" font-size="4.5" fill="#757575" font-family="Liberation Sans" textLength="7.6" lengthAdjust="spacingAndGlyphs">SHX</text></svg>
<div class="t" style="left:8.3px;top:59.02px;font-size:5.5px;color:#1d1d1d;">whtmtxt.shx</div>
<svg style="left:0.3px;top:58.3px" width="7.4" height="5" viewBox="0 0 7.4 5"><text x="0" y="4.3" font-size="4.5" fill="#757575" font-family="Liberation Sans" textLength="7.6" lengthAdjust="spacingAndGlyphs">SHX</text></svg>
<div class="t" style="left:8.3px;top:66.12px;font-size:5.5px;color:#1d1d1d;">fonts-(www.disama...</div>
<svg style="left:0.3px;top:65.4px" width="7.4" height="5" viewBox="0 0 7.4 5"><text x="0" y="4.3" font-size="4.5" fill="#757575" font-family="Liberation Sans" textLength="7.6" lengthAdjust="spacingAndGlyphs">SHX</text></svg>
<div class="a" style="left:71.8px;top:0;width:6.4px;height:72px;background:#fafafa;border-left:.5px solid #e4e4e4;"></div>
<div class="a" style="left:73.4px;top:2.0px;width:3px;height:7px;border-radius:1.5px;background:#a8a8a8;"></div>
</div>
<div class="a btn" style="left:3.0px;top:186.3px;width:11.4px;height:7.6px;border-radius:1px;"></div>
<div class="a btn" style="left:15.5px;top:186.3px;width:11.6px;height:7.6px;border-radius:1px;"></div>
<svg style="left:5.6px;top:187.4px" width="6" height="5.4" viewBox="0 0 6 5.4"><path d="M3 0.3 V5.1 M0.4 2.7 H5.6" stroke="#555" stroke-width=".8"/></svg>
<svg style="left:18.4px;top:187.4px" width="6" height="5.4" viewBox="0 0 6 5.4"><path d="M0.4 2.7 H5.6" stroke="#b4b4b4" stroke-width=".8"/></svg>
<div class="a btn" style="left:28.6px;top:186.3px;width:78.2px;height:7.6px;border-radius:1.5px;"></div>
<div class="a" style="left:100.0px;top:186.3px;width:6.8px;height:7.6px;border-radius:0 1.5px 1.5px 0;background:linear-gradient(#4d9bf8,#1a6df0);"></div>
<svg style="left:101.4px;top:187.3px" width="4" height="5.6" viewBox="0 0 4 5.6"><path d="M0.7 2.2 L2 0.8 L3.3 2.2 M0.7 3.4 L2 4.8 L3.3 3.4" stroke="#fff" stroke-width=".7" fill="none"/></svg>
<div class="t" style="left:32.2px;top:187.53px;font-size:5.3px;color:#222;">Styles in use</div>
<div class="a fld" style="left:110.0px;top:186.3px;width:60px;height:7.6px;border-radius:1.5px;border-color:#cdcdcd;"></div>
<svg style="left:113.0px;top:187.6px" width="5.4" height="5" viewBox="0 0 5.4 5"><circle cx="2.1" cy="2.1" r="1.5" fill="none" stroke="#8a8a8a" stroke-width=".7"/><path d="M3.2 3.2 L4.8 4.6" stroke="#8a8a8a" stroke-width=".7"/></svg>
<div class="t" style="left:121.2px;top:187.7px;font-size:5.0px;color:#c2c2c2;">Search</div>
<div class="a" style="left:2.2px;top:201.2px;width:8.4px;height:7.6px;border-radius:50%;background:#fff;box-shadow:0 0 0 .5px #c0c0c0;"></div>
<div class="t" style="left:4.8px;top:202.16px;font-size:5.6px;color:#333;">?</div>
<div class="a btn" style="left:192.5px;top:201px;width:34.4px;height:8.4px;border-radius:2px;"></div>
<div class="t" style="left:199.0px;top:201.94px;font-size:6.0px;color:#222;">Cancel</div>
<div class="a btn" style="left:235.4px;top:201px;width:31px;height:8.4px;border-radius:2px;"></div>
<div class="t" style="left:242.2px;top:201.94px;font-size:6.0px;color:#222;">Apply</div>
</div>
<div class="a" style="left:335px;top:335.3px;width:232.2px;height:68px;background:#4b4b4b;"></div>
<div class="t" style="-webkit-text-stroke:.08px currentColor;left:337.1px;top:337.96px;font-size:4.35px;color:#dcdcdc;">************ DEMO CO.&nbsp; PRESENT **LICENSE TO A.AMIRPOUR **********</div>
<div class="t" style="-webkit-text-stroke:.08px currentColor;left:337.1px;top:344.55px;font-size:4.72px;color:#dcdcdc;">&nbsp;FARSI Interpreter Version 5.00 Is loading ........... Completed</div>
<div class="t" style="-webkit-text-stroke:.08px currentColor;left:337.1px;top:351.2px;font-size:4.45px;color:#dcdcdc;">Command:</div>
<div class="t" style="-webkit-text-stroke:.08px currentColor;left:337.1px;top:357.8px;font-size:4.45px;color:#dcdcdc;">Command: *Cancel*</div>
<div class="t" style="-webkit-text-stroke:.08px currentColor;left:337.1px;top:364.5px;font-size:4.45px;color:#dcdcdc;">Command: *Cancel*</div>
<div class="t" style="-webkit-text-stroke:.08px currentColor;left:337.1px;top:371.3px;font-size:4.45px;color:#dcdcdc;">Command: _CLOSEALL</div>
<div class="t" style="-webkit-text-stroke:.08px currentColor;left:337.1px;top:378.1px;font-size:4.45px;color:#dcdcdc;">Command:</div>
<div class="t" style="-webkit-text-stroke:.08px currentColor;left:337.1px;top:384.8px;font-size:4.45px;color:#dcdcdc;">Command: ST</div>
<div class="t" style="-webkit-text-stroke:.08px currentColor;left:337.1px;top:391.5px;font-size:4.45px;color:#dcdcdc;">STYLE</div>
<div class="t" style="-webkit-text-stroke:.08px currentColor;left:337.1px;top:398.1px;font-size:4.45px;color:#dcdcdc;">Command: ST</div>
<div class="a" style="left:562.6px;top:375.5px;width:1.6px;height:24.8px;border-radius:.8px;background:#cfcfcf;"></div>
<div class="a" style="left:315px;top:403px;width:252.2px;height:10.4px;background:#424242;"></div>
<div class="a" style="left:335px;top:403px;width:232.2px;height:.6px;background:#3a3a3a;"></div>
<svg style="left:319.6px;top:405.4px" width="12" height="5.4" viewBox="0 0 12 5.4"><path d="M0.6 0.6 L3 2.4 L0.6 4.2" stroke="#bdbdbd" stroke-width=".7" fill="none"/><path d="M3.4 4.6 H6.2" stroke="#bdbdbd" stroke-width=".7"/><path d="M8 1.6 L11 1.6 L9.5 3.6Z" fill="#bdbdbd"/></svg>
<div class="t" style="left:337.4px;top:406.1px;font-size:4.4px;font-weight:bold;-webkit-text-stroke:0;color:#f2f2f2;">STYLE STYLE</div>
<div class="a" style="left:550.4px;top:405.3px;width:6px;height:5.4px;border-radius:50%;background:#c9c9c9;"></div>
<div class="t" style="left:552.1px;top:406.1px;font-size:4px;font-weight:bold;color:#444;">?</div>
<svg style="left:561.4px;top:406.8px" width="4.6" height="3" viewBox="0 0 4.6 3"><path d="M0.4 0.4 L4.2 0.4 L2.3 2.6Z" fill="#c4c4c4"/></svg>
<div id="status" class="a" style="top:413.4px;height:11.6px;"></div>
<div class="a" style="left:0;top:413.4px;width:850px;height:.6px;background:#3c3c3c;"></div>
<svg style="left:7.8px;top:416.8px" width="5.4" height="5.4" viewBox="0 0 5.4 5.4"><path d="M2.7 0.3 V5.1 M0.3 2.7 H5.1" stroke="#d0d0d0" stroke-width=".8"/></svg>
<svg style="left:22px;top:417px" width="7" height="5.4" viewBox="0 0 7 5.4"><rect x="0.6" y="2.4" width="5.8" height="2.6" fill="#d4d4d4"/><path d="M1 1 H6" stroke="#d4d4d4" stroke-width=".9"/></svg>
<div class="a" style="left:46.4px;top:413.8px;width:29px;height:11.2px;background:#626262;"></div>
<div class="a" style="left:76.6px;top:413.8px;width:40.4px;height:11.2px;background:#515151;"></div>
<div class="t" style="left:52.2px;top:417.6px;font-size:5.0px;font-weight:bold;color:#f4f4f4;">Model</div>
<svg style="left:79px;top:416.8px" width="6" height="6" viewBox="0 0 6 6"><path d="M3 0.3 V5.7 M0.3 3 H5.7" stroke="#b9b9b9" stroke-width=".7"/></svg>
<div class="t" style="left:92.2px;top:417.6px;font-size:5.0px;color:#8e8e8e;">Layout1</div>
<div class="t" style="left:559.6px;top:416.5px;font-size:5.7px;color:#cdcdcd;">659303.1053, -117040.5154, 0.0000</div>
<svg style="left:665.0px;top:414.8px" width="10" height="8.8" viewBox="0 0 10 8.8"><path d="M2.4 1.4 V7.4 M5 1.4 V7.4 M7.6 1.4 V7.4 M1.2 2.6 H8.8 M1.2 4.4 H8.8 M1.2 6.2 H8.8" stroke="#e8e8e8" stroke-width=".8"/></svg>
<svg style="left:676.6px;top:414.8px" width="10" height="8.8" viewBox="0 0 10 8.8"><g fill="#bdbdbd"><rect x="1.6" y="1.6" width="1" height="1"/><rect x="1.6" y="3.9" width="1" height="1"/><rect x="1.6" y="6.2" width="1" height="1"/><rect x="4.5" y="1.6" width="1" height="1"/><rect x="4.5" y="3.9" width="1" height="1"/><rect x="4.5" y="6.2" width="1" height="1"/><rect x="7.4" y="1.6" width="1" height="1"/><rect x="7.4" y="3.9" width="1" height="1"/><rect x="7.4" y="6.2" width="1" height="1"/></g></svg>
<svg style="left:687.4px;top:414.8px" width="10" height="8.8" viewBox="0 0 10 8.8"><path d="M2 1 V7.6 H9" stroke="#c8c8c8" stroke-width=".9" fill="none"/><path d="M4.4 7.6 V5.4 H6.6" stroke="#9a9a9a" stroke-width=".6" fill="none"/></svg>
<div class="a" style="left:698.9px;top:414.8px;width:9.4px;height:8.6px;background:#418dd6;"></div>
<svg style="left:698.6px;top:414.8px" width="10" height="8.8" viewBox="0 0 10 8.8"><circle cx="5" cy="4.6" r="3" fill="none" stroke="#e8e8e8" stroke-width="1"/><path d="M5 4.6 L8.8 1.2" stroke="#e8e8e8" stroke-width=".9"/></svg>
<div class="a" style="left:709.7px;top:414.8px;width:9.4px;height:8.6px;background:#418dd6;"></div>
<svg style="left:709.4px;top:414.8px" width="10" height="8.8" viewBox="0 0 10 8.8"><path d="M1.4 2.6 H4.4 M2.9 1.2 V4" stroke="#e8e8e8" stroke-width=".9"/><rect x="2" y="5" width="7" height="2.2" fill="#e8e8e8"/></svg>
<svg style="left:721.0px;top:414.8px" width="10" height="8.8" viewBox="0 0 10 8.8"><path d="M1 2 H9 M1 4.4 H9 M1 6.8 H9" stroke="#dcdcdc" stroke-width="1.2"/><path d="M1 2 H4 M1 4.4 H3" stroke="#8e8e8e" stroke-width="1.2"/></svg>
<div class="a" style="left:732.3px;top:414.8px;width:9.4px;height:8.6px;background:#418dd6;"></div>
<svg style="left:732.0px;top:414.8px" width="10" height="8.8" viewBox="0 0 10 8.8"><rect x="1.6" y="1.4" width="6.8" height="6" fill="none" stroke="#e8e8e8" stroke-width=".8"/><path d="M3.4 1.4 V7.4 M5 1.4 V7.4 M6.6 1.4 V7.4 M1.6 3.4 H8.4 M1.6 5.4 H8.4" stroke="#e8e8e8" stroke-width=".5"/></svg>
<div class="a" style="left:743.5px;top:414.8px;width:9.4px;height:8.6px;background:#418dd6;"></div>
<svg style="left:743.2px;top:414.8px" width="10" height="8.8" viewBox="0 0 10 8.8"><rect x="1.4" y="1.2" width="4.4" height="5.4" fill="none" stroke="#e8e8e8" stroke-width=".8"/><circle cx="6" cy="4.6" r="1.9" fill="#418dd6" stroke="#e8e8e8" stroke-width=".8"/><path d="M7.4 6 L9 7.8" stroke="#e8e8e8" stroke-width=".9"/></svg>
<div class="a" style="left:754.5px;top:414.8px;width:9.4px;height:8.6px;background:#418dd6;"></div>
<svg style="left:754.2px;top:414.8px" width="10" height="8.8" viewBox="0 0 10 8.8"><path d="M1.4 7.6 L8.8 1.4" stroke="#e8e8e8" stroke-width="1"/><path d="M1.4 7.6 H6" stroke="#e8e8e8" stroke-width=".6"/></svg>
<div class="a" style="left:765.7px;top:414.8px;width:9.4px;height:8.6px;background:#418dd6;"></div>
<svg style="left:765.4px;top:414.8px" width="10" height="8.8" viewBox="0 0 10 8.8"><rect x="2.4" y="2.4" width="6" height="5" fill="none" stroke="#e8e8e8" stroke-width=".8"/><rect x="1" y="1" width="2.6" height="2.4" fill="#e8e8e8"/></svg>
<div class="a" style="left:777.1px;top:414.8px;width:9.4px;height:8.6px;background:#418dd6;"></div>
<svg style="left:776.8px;top:414.8px" width="10" height="8.8" viewBox="0 0 10 8.8"><path d="M5 1 V4.6 M5 4.4 L1.6 7.8 M5 4.4 L8.4 7.8" stroke="#e8e8e8" stroke-width="1.5" fill="none"/><circle cx="8" cy="2" r="1.2" fill="#e8e8e8"/></svg>
<svg style="left:787.8px;top:414.8px" width="10" height="8.8" viewBox="0 0 10 8.8"><path d="M5 1 V4.6 M5 4.4 L1.6 7.8 M5 4.4 L8.4 7.8" stroke="#e8e8e8" stroke-width="1.3" fill="none"/><path d="M8 0.6 L8.5 1.8 L9.8 2 L8.8 2.8 L9 4 L8 3.4 L7 4 L7.2 2.8 L6.2 2 L7.5 1.8Z" fill="#e8c33a"/></svg>
<svg style="left:799.0px;top:414.8px" width="10" height="8.8" viewBox="0 0 10 8.8"><path d="M5 1 V4.6 M5 4.4 L1.6 7.8 M5 4.4 L8.4 7.8" stroke="#e8e8e8" stroke-width="1.3" fill="none"/></svg>
<div class="t" style="left:809.6px;top:416.6px;font-size:5px;color:#b4b4b4;">1:1</div>
<svg style="left:819.4px;top:418.2px" width="4" height="3" viewBox="0 0 4 3"><path d="M0.3 0.4 L3.7 0.4 L2 2.6Z" fill="#c4c4c4"/></svg>
<svg style="left:827.0px;top:414.8px" width="10" height="8.8" viewBox="0 0 10 8.8"><rect x="1" y="0.8" width="3" height="2.8" fill="none" stroke="#e8e8e8" stroke-width=".8"/><circle cx="7.6" cy="2.6" r="1.6" fill="none" stroke="#e8e8e8" stroke-width=".8"/><path d="M4.6 4.6 L6.6 8 L2.6 8Z" fill="none" stroke="#e8e8e8" stroke-width=".8"/></svg>
<svg style="left:837.6px;top:414.8px" width="10" height="8.8" viewBox="0 0 10 8.8"><rect x="4.3" y="0.2" width="1.6" height="2" fill="#e8e8e8" transform="rotate(0 5.1 4.4)"/><rect x="4.3" y="0.2" width="1.6" height="2" fill="#e8e8e8" transform="rotate(45 5.1 4.4)"/><rect x="4.3" y="0.2" width="1.6" height="2" fill="#e8e8e8" transform="rotate(90 5.1 4.4)"/><rect x="4.3" y="0.2" width="1.6" height="2" fill="#e8e8e8" transform="rotate(135 5.1 4.4)"/><rect x="4.3" y="0.2" width="1.6" height="2" fill="#e8e8e8" transform="rotate(180 5.1 4.4)"/><rect x="4.3" y="0.2" width="1.6" height="2" fill="#e8e8e8" transform="rotate(225 5.1 4.4)"/><rect x="4.3" y="0.2" width="1.6" height="2" fill="#e8e8e8" transform="rotate(270 5.1 4.4)"/><rect x="4.3" y="0.2" width="1.6" height="2" fill="#e8e8e8" transform="rotate(315 5.1 4.4)"/><circle cx="5.1" cy="4.4" r="2.9" fill="#e8e8e8"/><circle cx="5.1" cy="4.4" r="1.3" fill="#484848"/></svg>
<div class="a" style="left:765px;top:375px;width:85px;height:36.8px;background:#cfcfcf;border-radius:10px 0 0 10px;box-shadow:inset 0 0 0 .8px #e6e6e6;"></div>
<svg style="left:773.6px;top:384.6px" width="43" height="9" viewBox="0 0 43 9"><path d="M13 6 H37" stroke="#1a1a1a" stroke-width="1.2" fill="none"/><path d="M27.6 6 V3.6 M30 6 V3.6 M32.4 6 V3.6" stroke="#1a1a1a" stroke-width=".9"/><path d="M38.4 1.6 C41.4 3.4 42.6 5.8 40.6 6.4 L36.6 6.2" stroke="#1a1a1a" stroke-width="1.3" fill="none"/><path d="M0.6 4.2 C0.6 2.4 2.4 2 4 2.6 L4.8 1 L12.4 0.6 L12.6 2 L7 2.6 C9 3 12 3.4 13.4 5.4 L13.4 6.8 L2.6 6.8 C1.2 6.8 0.6 5.6 0.6 4.2Z" fill="#1a1a1a"/></svg>
<div class="t" style="left:773.6px;top:391.6px;font-family:'Liberation Serif',serif;font-size:9.6px;font-weight:bold;letter-spacing:2.1px;color:#e01f26;transform:scaleX(1.03);">Disa</div>
<div class="t" style="left:802.6px;top:396.8px;font-size:4.6px;font-weight:bold;letter-spacing:1.1px;color:#222;">mag</div>
<svg style="left:818.6px;top:375.6px" width="30" height="36" viewBox="0 0 30 36"><path d="M1 9.6 L15 1 L29 9.6 L29 13 L15 4.6 L1 13Z" fill="#dc1f26"/><path d="M1 14.4 L4.4 16 L4.4 30 L1 28.4Z" fill="#dc1f26"/><path d="M6.6 17 L14 20.6 L14 23.6 L9.4 21.4 L9.4 23.4 L14 25.6 L14 34.4 L6.6 30.8 L6.6 27.8 L11.2 30 L11.2 28 L6.6 25.8Z" fill="#dc1f26"/><path d="M16 20.6 L22 11 L28.6 16.6 L28.6 28.4 L25.4 30 L25.4 25 L19.4 28 L19.4 33 L16 34.6Z M19.4 24.4 L25.4 21.4 L25.4 18.4 L22.4 16 L19.4 20.6Z" fill="#dc1f26" fill-rule="evenodd"/><path d="M5 13.4 L15 7.4 L25 13.4" stroke="#dc1f26" stroke-width="1.1" fill="none"/></svg>
</body>
</html>
